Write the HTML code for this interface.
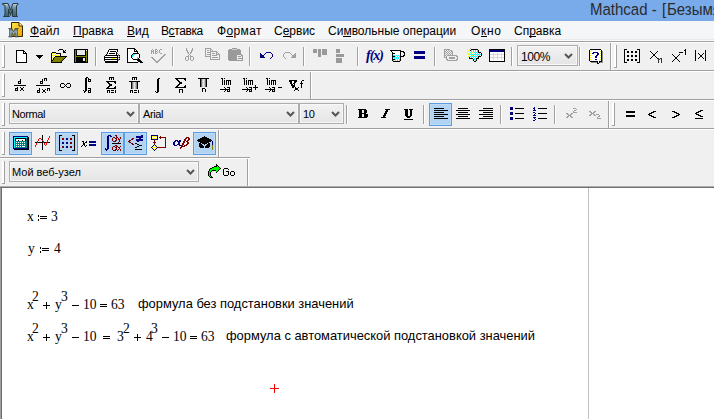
<!DOCTYPE html>
<html><head><meta charset="utf-8">
<style>
*{margin:0;padding:0;box-sizing:border-box}
html,body{width:714px;height:419px;overflow:hidden;background:#fff}
body{position:relative;font-family:"Liberation Sans",sans-serif}
.a{position:absolute}
.t{position:absolute;white-space:nowrap;line-height:1}
.m{font-size:12px;color:#000;top:25px}
.m u{text-decoration:none}
.combo{position:absolute;background:linear-gradient(#f2f2f2,#e5e5e5);border:1px solid #adadad;box-shadow:inset 0 0 0 1px #f8f8f8}
.ct{position:absolute;font-size:11px;color:#000;white-space:nowrap;line-height:1;letter-spacing:-0.4px}
.chev{position:absolute;width:7px;height:5px}
.serif{position:absolute;white-space:nowrap;font-family:"Liberation Serif",serif;font-size:13.6px;color:#000;line-height:1}
.txt{position:absolute;white-space:nowrap;font-family:"Liberation Sans",sans-serif;font-size:12.9px;color:#000;line-height:1}
</style></head><body>
<div class="a" style="left:0;top:0;width:714px;height:21px;background:#79aaea"></div>
<div class="t" style="left:590px;top:2px;font-size:15px;color:#2b2b2b;transform:scaleY(1.1);transform-origin:0 13px">Mathcad -</div>
<div class="t" style="left:662px;top:2px;font-size:15px;color:#2b2b2b;transform:scaleY(1.1);transform-origin:0 13px">[</div>
<div class="t" style="left:667px;top:2px;font-size:15px;color:#2b2b2b;transform:scaleY(1.1);transform-origin:0 13px">Безымянный:1]</div>
<div class="a" style="left:0;top:21px;width:714px;height:20px;background:#f5f6f7"></div>
<div class="t m" style="left:30px"><u>Ф</u>айл</div>
<div class="t m" style="left:73px"><u>П</u>равка</div>
<div class="t m" style="left:127px"><u>В</u>ид</div>
<div class="t m" style="left:161px;letter-spacing:-0.4px">В<u>с</u>тавка</div>
<div class="t m" style="left:217px;letter-spacing:0.35px">Ф<u>о</u>рмат</div>
<div class="t m" style="left:274px">С<u>е</u>рвис</div>
<div class="t m" style="left:328px">Си<u>м</u>вольные операции</div>
<div class="t m" style="left:471px;letter-spacing:0.7px">О<u>к</u>но</div>
<div class="t m" style="left:514px">Сп<u>р</u>авка</div>
<!-- mathcad icon -->
<svg class="a" style="left:0;top:0" width="30" height="41">
<defs>
<linearGradient id="mg" x1="0" y1="0" x2="0" y2="1"><stop offset="0" stop-color="#d0d6d8"/><stop offset="0.35" stop-color="#6c8a98"/><stop offset="1" stop-color="#3e6070"/></linearGradient>
<linearGradient id="dg" x1="0" y1="0" x2="1" y2="1"><stop offset="0" stop-color="#ffe84a"/><stop offset="1" stop-color="#f0a000"/></linearGradient>
<linearGradient id="mg2" x1="0" y1="0" x2="0" y2="1"><stop offset="0" stop-color="#4a5a60"/><stop offset="0.4" stop-color="#a0b4bc"/><stop offset="1" stop-color="#5a7888"/></linearGradient>
</defs>
<path d="M2.5,3.5 H8 L10.5,10 L13,3.5 H18 V4.5 L16.5,5.5 V15 L17.5,16.5 H12.5 V9 L10.5,15.5 L8.5,9 V15 L9.5,16.5 H3.5 L5,15 V5.5 L2.5,4.5 Z" fill="url(#mg)" stroke="#283a42" stroke-width="1"/>
<path d="M11.5,22.5 H19 L22.5,26 V36.5 H11.5 Z" fill="url(#dg)" stroke="#3a2a00" stroke-width="1"/>
<path d="M19,22.5 V26 H22.5" fill="#fff6b0" stroke="#3a2a00" stroke-width="1"/>
<path d="M8.5,28.5 H12 L13.5,32 L15,28.5 H18.5 L17.5,29.5 V36 L18.5,37 H15 V32.5 L13.5,36.5 L12,32.5 V36 L12.5,37 H8.5 L9.5,36 V29.5 Z" fill="url(#mg2)" stroke="#2c3c44" stroke-width="0.6"/>
</svg>

<div class="a" style="left:0;top:39px;width:714px;height:1px;background:#e8e9ea"></div>
<div class="a" style="left:0;top:40px;width:714px;height:1px;background:#fbfbfb"></div>
<div class="a" style="left:0;top:41px;width:714px;height:145px;background:#f0f0f0"></div>
<div class="a" style="left:0;top:41px;width:714px;height:1px;background:#a0a0a0"></div>
<div class="a" style="left:0;top:42px;width:714px;height:1px;background:#fff"></div>
<div class="a" style="left:0;top:70px;width:714px;height:1px;background:#a0a0a0"></div>
<div class="a" style="left:0;top:71px;width:714px;height:1px;background:#fff"></div>
<div class="a" style="left:0;top:99px;width:714px;height:1px;background:#a0a0a0"></div>
<div class="a" style="left:0;top:100px;width:714px;height:1px;background:#fff"></div>
<div class="a" style="left:0;top:128px;width:714px;height:1px;background:#a0a0a0"></div>
<div class="a" style="left:0;top:129px;width:714px;height:1px;background:#fff"></div>
<div class="a" style="left:0;top:157px;width:250px;height:1px;background:#a0a0a0"></div>
<div class="a" style="left:0;top:158px;width:249px;height:1px;background:#fff"></div>

<!-- combos -->
<div class="combo" style="left:517px;top:45px;width:61px;height:21px"></div>
<div class="ct" style="left:521px;top:51px;font-size:12px">100%</div>
<div class="combo" style="left:9px;top:103px;width:130px;height:21px"></div>
<div class="ct" style="left:12px;top:109px">Normal</div>
<div class="combo" style="left:139px;top:103px;width:160px;height:21px"></div>
<div class="ct" style="left:143px;top:109px">Arial</div>
<div class="combo" style="left:299px;top:103px;width:45px;height:21px"></div>
<div class="ct" style="left:303px;top:109px">10</div>
<div class="combo" style="left:9px;top:161px;width:190px;height:21px"></div>
<div class="ct" style="left:12px;top:167px;letter-spacing:0">Мой веб-узел</div>

<div class="a" style="left:0;top:186px;width:714px;height:1px;background:#b0b0b0"></div>
<div class="a" style="left:0;top:187px;width:714px;height:1px;background:#6d6d6d"></div>
<div class="a" style="left:0;top:188px;width:1px;height:231px;background:#a0a0a0"></div>
<div class="a" style="left:1px;top:188px;width:1px;height:231px;background:#6d6d6d"></div>
<div class="a" style="left:588px;top:188px;width:1px;height:231px;background:#c0c0c0"></div>

<svg class="a" style="left:0;top:0" width="714" height="419" shape-rendering="crispEdges"><rect x="2" y="45" width="2" height="23" fill="#ffffff"/><rect x="4" y="45" width="1" height="23" fill="#a0a0a0"/><rect x="2" y="67" width="3" height="1" fill="#a0a0a0"/><rect x="95" y="47" width="1" height="19" fill="#a0a0a0"/><rect x="96" y="47" width="1" height="19" fill="#ffffff"/><rect x="172" y="47" width="1" height="19" fill="#a0a0a0"/><rect x="173" y="47" width="1" height="19" fill="#ffffff"/><rect x="249" y="47" width="1" height="19" fill="#a0a0a0"/><rect x="250" y="47" width="1" height="19" fill="#ffffff"/><rect x="303" y="47" width="1" height="19" fill="#a0a0a0"/><rect x="304" y="47" width="1" height="19" fill="#ffffff"/><rect x="357" y="47" width="1" height="19" fill="#a0a0a0"/><rect x="358" y="47" width="1" height="19" fill="#ffffff"/><rect x="434" y="47" width="1" height="19" fill="#a0a0a0"/><rect x="435" y="47" width="1" height="19" fill="#ffffff"/><rect x="511" y="47" width="1" height="19" fill="#a0a0a0"/><rect x="512" y="47" width="1" height="19" fill="#ffffff"/><rect x="579" y="47" width="1" height="19" fill="#a0a0a0"/><rect x="580" y="47" width="1" height="19" fill="#ffffff"/><rect x="610" y="43" width="1" height="27" fill="#a0a0a0"/><rect x="611" y="43" width="1" height="27" fill="#ffffff"/><rect x="614" y="45" width="2" height="23" fill="#ffffff"/><rect x="616" y="45" width="1" height="23" fill="#a0a0a0"/><rect x="614" y="67" width="3" height="1" fill="#a0a0a0"/><rect x="2" y="74" width="2" height="23" fill="#ffffff"/><rect x="4" y="74" width="1" height="23" fill="#a0a0a0"/><rect x="2" y="96" width="3" height="1" fill="#a0a0a0"/><rect x="310" y="72" width="1" height="27" fill="#a0a0a0"/><rect x="311" y="72" width="1" height="27" fill="#ffffff"/><rect x="2" y="103" width="2" height="23" fill="#ffffff"/><rect x="4" y="103" width="1" height="23" fill="#a0a0a0"/><rect x="2" y="125" width="3" height="1" fill="#a0a0a0"/><rect x="346" y="105" width="1" height="19" fill="#a0a0a0"/><rect x="347" y="105" width="1" height="19" fill="#ffffff"/><rect x="423" y="105" width="1" height="19" fill="#a0a0a0"/><rect x="424" y="105" width="1" height="19" fill="#ffffff"/><rect x="500" y="105" width="1" height="19" fill="#a0a0a0"/><rect x="501" y="105" width="1" height="19" fill="#ffffff"/><rect x="554" y="105" width="1" height="19" fill="#a0a0a0"/><rect x="555" y="105" width="1" height="19" fill="#ffffff"/><rect x="608" y="101" width="1" height="27" fill="#a0a0a0"/><rect x="609" y="101" width="1" height="27" fill="#ffffff"/><rect x="612" y="103" width="2" height="23" fill="#ffffff"/><rect x="614" y="103" width="1" height="23" fill="#a0a0a0"/><rect x="612" y="125" width="3" height="1" fill="#a0a0a0"/><rect x="2" y="132" width="2" height="23" fill="#ffffff"/><rect x="4" y="132" width="1" height="23" fill="#a0a0a0"/><rect x="2" y="154" width="3" height="1" fill="#a0a0a0"/><rect x="218" y="130" width="1" height="27" fill="#a0a0a0"/><rect x="219" y="130" width="1" height="27" fill="#ffffff"/><rect x="2" y="161" width="2" height="23" fill="#ffffff"/><rect x="4" y="161" width="1" height="23" fill="#a0a0a0"/><rect x="2" y="183" width="3" height="1" fill="#a0a0a0"/><rect x="247" y="159" width="1" height="27" fill="#a0a0a0"/><rect x="248" y="159" width="1" height="27" fill="#ffffff"/><rect x="429" y="103" width="23" height="23" fill="#5c9ee4"/><rect x="430" y="104" width="21" height="21" fill="#bedbf5"/><rect x="431" y="105" width="19" height="19" fill="#b3d3f2"/><rect x="9" y="132" width="23" height="23" fill="#5c9ee4"/><rect x="10" y="133" width="21" height="21" fill="#bedbf5"/><rect x="11" y="134" width="19" height="19" fill="#b3d3f2"/><rect x="55" y="132" width="23" height="23" fill="#5c9ee4"/><rect x="56" y="133" width="21" height="21" fill="#bedbf5"/><rect x="57" y="134" width="19" height="19" fill="#b3d3f2"/><rect x="101" y="132" width="23" height="23" fill="#5c9ee4"/><rect x="102" y="133" width="21" height="21" fill="#bedbf5"/><rect x="103" y="134" width="19" height="19" fill="#b3d3f2"/><rect x="124" y="132" width="23" height="23" fill="#5c9ee4"/><rect x="125" y="133" width="21" height="21" fill="#bedbf5"/><rect x="126" y="134" width="19" height="19" fill="#b3d3f2"/><rect x="193" y="132" width="23" height="23" fill="#5c9ee4"/><rect x="194" y="133" width="21" height="21" fill="#bedbf5"/><rect x="195" y="134" width="19" height="19" fill="#b3d3f2"/><rect x="313" y="49" width="4" height="4" fill="#999999"/><rect x="318" y="49" width="3" height="8" fill="#999999"/><rect x="322" y="49" width="5" height="6" fill="#999999"/><rect x="336" y="49" width="4" height="4" fill="#999999"/><rect x="336" y="54" width="8" height="3" fill="#999999"/><rect x="336" y="58" width="6" height="5" fill="#999999"/><rect x="414" y="51" width="11" height="3" fill="#000080"/><rect x="414" y="56" width="11" height="3" fill="#000080"/><rect x="30" y="36" width="9" height="1" fill="#000"/><rect x="73" y="36" width="9" height="1" fill="#000"/><rect x="127" y="36" width="8" height="1" fill="#000"/><rect x="169" y="36" width="6" height="1" fill="#000"/><rect x="226" y="36" width="7" height="1" fill="#000"/><rect x="283" y="36" width="7" height="1" fill="#000"/><rect x="343" y="36" width="8" height="1" fill="#000"/><rect x="481" y="36" width="6" height="1" fill="#000"/><rect x="529" y="36" width="7" height="1" fill="#000"/><rect x="16" y="50" width="8" height="1" fill="#000000"/><rect x="16" y="51" width="1" height="1" fill="#000000"/><rect x="17" y="51" width="6" height="1" fill="#ffffff"/><rect x="23" y="51" width="2" height="1" fill="#000000"/><rect x="16" y="52" width="1" height="1" fill="#000000"/><rect x="17" y="52" width="6" height="1" fill="#ffffff"/><rect x="23" y="52" width="1" height="1" fill="#000000"/><rect x="24" y="52" width="1" height="1" fill="#ffffff"/><rect x="25" y="52" width="1" height="1" fill="#000000"/><rect x="16" y="53" width="1" height="1" fill="#000000"/><rect x="17" y="53" width="6" height="1" fill="#ffffff"/><rect x="23" y="53" width="4" height="1" fill="#000000"/><rect x="16" y="54" width="1" height="1" fill="#000000"/><rect x="17" y="54" width="9" height="1" fill="#ffffff"/><rect x="26" y="54" width="1" height="1" fill="#000000"/><rect x="16" y="55" width="1" height="1" fill="#000000"/><rect x="17" y="55" width="9" height="1" fill="#ffffff"/><rect x="26" y="55" width="1" height="1" fill="#000000"/><rect x="16" y="56" width="1" height="1" fill="#000000"/><rect x="17" y="56" width="9" height="1" fill="#ffffff"/><rect x="26" y="56" width="1" height="1" fill="#000000"/><rect x="16" y="57" width="1" height="1" fill="#000000"/><rect x="17" y="57" width="9" height="1" fill="#ffffff"/><rect x="26" y="57" width="1" height="1" fill="#000000"/><rect x="16" y="58" width="1" height="1" fill="#000000"/><rect x="17" y="58" width="9" height="1" fill="#ffffff"/><rect x="26" y="58" width="1" height="1" fill="#000000"/><rect x="16" y="59" width="1" height="1" fill="#000000"/><rect x="17" y="59" width="9" height="1" fill="#ffffff"/><rect x="26" y="59" width="1" height="1" fill="#000000"/><rect x="16" y="60" width="1" height="1" fill="#000000"/><rect x="17" y="60" width="9" height="1" fill="#ffffff"/><rect x="26" y="60" width="1" height="1" fill="#000000"/><rect x="16" y="61" width="1" height="1" fill="#000000"/><rect x="17" y="61" width="9" height="1" fill="#ffffff"/><rect x="26" y="61" width="1" height="1" fill="#000000"/><rect x="16" y="62" width="11" height="1" fill="#000000"/><rect x="36" y="55" width="7" height="1" fill="#000000"/><rect x="37" y="56" width="5" height="1" fill="#000000"/><rect x="38" y="57" width="3" height="1" fill="#000000"/><rect x="39" y="58" width="1" height="1" fill="#000000"/><rect x="59" y="49" width="4" height="1" fill="#000000"/><rect x="58" y="50" width="1" height="1" fill="#000000"/><rect x="63" y="50" width="1" height="1" fill="#000000"/><rect x="65" y="50" width="1" height="1" fill="#000000"/><rect x="63" y="51" width="2" height="1" fill="#000000"/><rect x="52" y="52" width="4" height="1" fill="#000000"/><rect x="63" y="52" width="3" height="1" fill="#000000"/><rect x="51" y="53" width="1" height="1" fill="#000000"/><rect x="52" y="53" width="1" height="1" fill="#ffff00"/><rect x="53" y="53" width="1" height="1" fill="#ffffff"/><rect x="54" y="53" width="1" height="1" fill="#ffff00"/><rect x="55" y="53" width="1" height="1" fill="#ffffff"/><rect x="56" y="53" width="5" height="1" fill="#000000"/><rect x="51" y="54" width="1" height="1" fill="#000000"/><rect x="52" y="54" width="1" height="1" fill="#ffffff"/><rect x="53" y="54" width="1" height="1" fill="#ffff00"/><rect x="54" y="54" width="1" height="1" fill="#ffffff"/><rect x="55" y="54" width="1" height="1" fill="#ffff00"/><rect x="56" y="54" width="1" height="1" fill="#ffffff"/><rect x="57" y="54" width="1" height="1" fill="#ffff00"/><rect x="58" y="54" width="1" height="1" fill="#ffffff"/><rect x="59" y="54" width="1" height="1" fill="#ffff00"/><rect x="60" y="54" width="1" height="1" fill="#000000"/><rect x="51" y="55" width="1" height="1" fill="#000000"/><rect x="52" y="55" width="1" height="1" fill="#ffff00"/><rect x="53" y="55" width="1" height="1" fill="#ffffff"/><rect x="54" y="55" width="1" height="1" fill="#ffff00"/><rect x="55" y="55" width="1" height="1" fill="#ffffff"/><rect x="56" y="55" width="1" height="1" fill="#ffff00"/><rect x="57" y="55" width="1" height="1" fill="#ffffff"/><rect x="58" y="55" width="1" height="1" fill="#ffff00"/><rect x="59" y="55" width="1" height="1" fill="#ffffff"/><rect x="60" y="55" width="1" height="1" fill="#000000"/><rect x="51" y="56" width="1" height="1" fill="#000000"/><rect x="52" y="56" width="1" height="1" fill="#ffffff"/><rect x="53" y="56" width="1" height="1" fill="#ffff00"/><rect x="54" y="56" width="1" height="1" fill="#ffffff"/><rect x="55" y="56" width="12" height="1" fill="#000000"/><rect x="51" y="57" width="1" height="1" fill="#000000"/><rect x="52" y="57" width="1" height="1" fill="#ffff00"/><rect x="53" y="57" width="1" height="1" fill="#ffffff"/><rect x="54" y="57" width="1" height="1" fill="#000000"/><rect x="55" y="57" width="10" height="1" fill="#808000"/><rect x="65" y="57" width="1" height="1" fill="#000000"/><rect x="51" y="58" width="1" height="1" fill="#000000"/><rect x="52" y="58" width="1" height="1" fill="#ffffff"/><rect x="53" y="58" width="1" height="1" fill="#000000"/><rect x="54" y="58" width="10" height="1" fill="#808000"/><rect x="64" y="58" width="1" height="1" fill="#000000"/><rect x="51" y="59" width="1" height="1" fill="#000000"/><rect x="52" y="59" width="1" height="1" fill="#ffff00"/><rect x="53" y="59" width="1" height="1" fill="#000000"/><rect x="54" y="59" width="9" height="1" fill="#808000"/><rect x="63" y="59" width="1" height="1" fill="#000000"/><rect x="51" y="60" width="2" height="1" fill="#000000"/><rect x="53" y="60" width="9" height="1" fill="#808000"/><rect x="62" y="60" width="1" height="1" fill="#000000"/><rect x="51" y="61" width="1" height="1" fill="#000000"/><rect x="52" y="61" width="9" height="1" fill="#808000"/><rect x="61" y="61" width="1" height="1" fill="#000000"/><rect x="51" y="62" width="11" height="1" fill="#000000"/><rect x="74" y="49" width="14" height="1" fill="#000000"/><rect x="74" y="50" width="1" height="1" fill="#000000"/><rect x="75" y="50" width="1" height="1" fill="#808000"/><rect x="76" y="50" width="1" height="1" fill="#000000"/><rect x="77" y="50" width="8" height="1" fill="#e8e8e8"/><rect x="85" y="50" width="1" height="1" fill="#000000"/><rect x="86" y="50" width="1" height="1" fill="#ffffff"/><rect x="87" y="50" width="1" height="1" fill="#000000"/><rect x="74" y="51" width="1" height="1" fill="#000000"/><rect x="75" y="51" width="1" height="1" fill="#808000"/><rect x="76" y="51" width="1" height="1" fill="#000000"/><rect x="77" y="51" width="8" height="1" fill="#e8e8e8"/><rect x="85" y="51" width="1" height="1" fill="#000000"/><rect x="86" y="51" width="1" height="1" fill="#808000"/><rect x="87" y="51" width="1" height="1" fill="#000000"/><rect x="74" y="52" width="1" height="1" fill="#000000"/><rect x="75" y="52" width="1" height="1" fill="#808000"/><rect x="76" y="52" width="1" height="1" fill="#000000"/><rect x="77" y="52" width="8" height="1" fill="#e8e8e8"/><rect x="85" y="52" width="1" height="1" fill="#000000"/><rect x="86" y="52" width="1" height="1" fill="#808000"/><rect x="87" y="52" width="1" height="1" fill="#000000"/><rect x="74" y="53" width="1" height="1" fill="#000000"/><rect x="75" y="53" width="1" height="1" fill="#808000"/><rect x="76" y="53" width="1" height="1" fill="#000000"/><rect x="77" y="53" width="8" height="1" fill="#e8e8e8"/><rect x="85" y="53" width="1" height="1" fill="#000000"/><rect x="86" y="53" width="1" height="1" fill="#808000"/><rect x="87" y="53" width="1" height="1" fill="#000000"/><rect x="74" y="54" width="1" height="1" fill="#000000"/><rect x="75" y="54" width="1" height="1" fill="#808000"/><rect x="76" y="54" width="1" height="1" fill="#000000"/><rect x="77" y="54" width="8" height="1" fill="#e8e8e8"/><rect x="85" y="54" width="1" height="1" fill="#000000"/><rect x="86" y="54" width="1" height="1" fill="#808000"/><rect x="87" y="54" width="1" height="1" fill="#000000"/><rect x="74" y="55" width="1" height="1" fill="#000000"/><rect x="75" y="55" width="1" height="1" fill="#808000"/><rect x="76" y="55" width="10" height="1" fill="#000000"/><rect x="86" y="55" width="1" height="1" fill="#808000"/><rect x="87" y="55" width="1" height="1" fill="#000000"/><rect x="74" y="56" width="1" height="1" fill="#000000"/><rect x="75" y="56" width="12" height="1" fill="#808000"/><rect x="87" y="56" width="1" height="1" fill="#000000"/><rect x="74" y="57" width="1" height="1" fill="#000000"/><rect x="75" y="57" width="1" height="1" fill="#808000"/><rect x="76" y="57" width="10" height="1" fill="#000000"/><rect x="86" y="57" width="1" height="1" fill="#808000"/><rect x="87" y="57" width="1" height="1" fill="#000000"/><rect x="74" y="58" width="1" height="1" fill="#000000"/><rect x="75" y="58" width="1" height="1" fill="#808000"/><rect x="76" y="58" width="7" height="1" fill="#000000"/><rect x="83" y="58" width="2" height="1" fill="#e8e8e8"/><rect x="85" y="58" width="1" height="1" fill="#000000"/><rect x="86" y="58" width="1" height="1" fill="#808000"/><rect x="87" y="58" width="1" height="1" fill="#000000"/><rect x="74" y="59" width="1" height="1" fill="#000000"/><rect x="75" y="59" width="1" height="1" fill="#808000"/><rect x="76" y="59" width="7" height="1" fill="#000000"/><rect x="83" y="59" width="2" height="1" fill="#e8e8e8"/><rect x="85" y="59" width="1" height="1" fill="#000000"/><rect x="86" y="59" width="1" height="1" fill="#808000"/><rect x="87" y="59" width="1" height="1" fill="#000000"/><rect x="74" y="60" width="1" height="1" fill="#000000"/><rect x="75" y="60" width="1" height="1" fill="#808000"/><rect x="76" y="60" width="7" height="1" fill="#000000"/><rect x="83" y="60" width="2" height="1" fill="#e8e8e8"/><rect x="85" y="60" width="1" height="1" fill="#000000"/><rect x="86" y="60" width="1" height="1" fill="#808000"/><rect x="87" y="60" width="1" height="1" fill="#000000"/><rect x="74" y="61" width="1" height="1" fill="#000000"/><rect x="75" y="61" width="1" height="1" fill="#808000"/><rect x="76" y="61" width="10" height="1" fill="#000000"/><rect x="86" y="61" width="1" height="1" fill="#808000"/><rect x="87" y="61" width="1" height="1" fill="#000000"/><rect x="74" y="62" width="14" height="1" fill="#000000"/><rect x="109" y="49" width="9" height="1" fill="#000000"/><rect x="108" y="50" width="1" height="1" fill="#000000"/><rect x="109" y="50" width="8" height="1" fill="#ffffff"/><rect x="117" y="50" width="1" height="1" fill="#000000"/><rect x="108" y="51" width="1" height="1" fill="#000000"/><rect x="109" y="51" width="1" height="1" fill="#ffffff"/><rect x="110" y="51" width="6" height="1" fill="#000000"/><rect x="116" y="51" width="1" height="1" fill="#ffffff"/><rect x="117" y="51" width="1" height="1" fill="#000000"/><rect x="107" y="52" width="1" height="1" fill="#000000"/><rect x="108" y="52" width="8" height="1" fill="#ffffff"/><rect x="116" y="52" width="1" height="1" fill="#000000"/><rect x="107" y="53" width="1" height="1" fill="#000000"/><rect x="108" y="53" width="1" height="1" fill="#ffffff"/><rect x="109" y="53" width="6" height="1" fill="#000000"/><rect x="115" y="53" width="1" height="1" fill="#ffffff"/><rect x="116" y="53" width="1" height="1" fill="#000000"/><rect x="117" y="53" width="1" height="1" fill="#808080"/><rect x="106" y="54" width="1" height="1" fill="#000000"/><rect x="107" y="54" width="9" height="1" fill="#ffffff"/><rect x="116" y="54" width="1" height="1" fill="#000000"/><rect x="117" y="54" width="1" height="1" fill="#ffffff"/><rect x="118" y="54" width="1" height="1" fill="#808080"/><rect x="105" y="55" width="13" height="1" fill="#000000"/><rect x="118" y="55" width="1" height="1" fill="#808080"/><rect x="119" y="55" width="1" height="1" fill="#000000"/><rect x="104" y="56" width="1" height="1" fill="#000000"/><rect x="105" y="56" width="12" height="1" fill="#ffffff"/><rect x="117" y="56" width="1" height="1" fill="#000000"/><rect x="118" y="56" width="1" height="1" fill="#ffffff"/><rect x="119" y="56" width="1" height="1" fill="#808080"/><rect x="104" y="57" width="14" height="1" fill="#000000"/><rect x="118" y="57" width="1" height="1" fill="#808080"/><rect x="119" y="57" width="1" height="1" fill="#000000"/><rect x="104" y="58" width="1" height="1" fill="#000000"/><rect x="105" y="58" width="6" height="1" fill="#ffffff"/><rect x="111" y="58" width="4" height="1" fill="#ffff00"/><rect x="115" y="58" width="2" height="1" fill="#ffffff"/><rect x="117" y="58" width="1" height="1" fill="#000000"/><rect x="118" y="58" width="1" height="1" fill="#ffffff"/><rect x="119" y="58" width="1" height="1" fill="#808080"/><rect x="104" y="59" width="14" height="1" fill="#000000"/><rect x="118" y="59" width="1" height="1" fill="#808080"/><rect x="119" y="59" width="1" height="1" fill="#000000"/><rect x="104" y="60" width="1" height="1" fill="#000000"/><rect x="105" y="60" width="12" height="1" fill="#ffffff"/><rect x="117" y="60" width="1" height="1" fill="#000000"/><rect x="118" y="60" width="1" height="1" fill="#808080"/><rect x="105" y="61" width="13" height="1" fill="#000000"/><rect x="105" y="62" width="13" height="1" fill="#000000"/><rect x="127" y="48" width="8" height="1" fill="#000000"/><rect x="127" y="49" width="1" height="1" fill="#000000"/><rect x="128" y="49" width="6" height="1" fill="#ffffff"/><rect x="134" y="49" width="2" height="1" fill="#000000"/><rect x="127" y="50" width="1" height="1" fill="#000000"/><rect x="128" y="50" width="6" height="1" fill="#ffffff"/><rect x="134" y="50" width="1" height="1" fill="#000000"/><rect x="135" y="50" width="1" height="1" fill="#ffffff"/><rect x="136" y="50" width="1" height="1" fill="#000000"/><rect x="127" y="51" width="1" height="1" fill="#000000"/><rect x="128" y="51" width="6" height="1" fill="#ffffff"/><rect x="134" y="51" width="4" height="1" fill="#000000"/><rect x="127" y="52" width="1" height="1" fill="#000000"/><rect x="128" y="52" width="9" height="1" fill="#ffffff"/><rect x="137" y="52" width="1" height="1" fill="#000000"/><rect x="127" y="53" width="1" height="1" fill="#000000"/><rect x="128" y="53" width="5" height="1" fill="#ffffff"/><rect x="133" y="53" width="6" height="1" fill="#000000"/><rect x="127" y="54" width="1" height="1" fill="#000000"/><rect x="128" y="54" width="4" height="1" fill="#ffffff"/><rect x="132" y="54" width="1" height="1" fill="#000000"/><rect x="133" y="54" width="2" height="1" fill="#00ffff"/><rect x="135" y="54" width="4" height="1" fill="#ffffff"/><rect x="139" y="54" width="1" height="1" fill="#000000"/><rect x="127" y="55" width="1" height="1" fill="#000000"/><rect x="128" y="55" width="3" height="1" fill="#ffffff"/><rect x="131" y="55" width="1" height="1" fill="#000000"/><rect x="132" y="55" width="2" height="1" fill="#00ffff"/><rect x="134" y="55" width="5" height="1" fill="#ffffff"/><rect x="139" y="55" width="1" height="1" fill="#000000"/><rect x="127" y="56" width="1" height="1" fill="#000000"/><rect x="128" y="56" width="3" height="1" fill="#ffffff"/><rect x="131" y="56" width="1" height="1" fill="#000000"/><rect x="132" y="56" width="1" height="1" fill="#00ffff"/><rect x="133" y="56" width="6" height="1" fill="#ffffff"/><rect x="139" y="56" width="1" height="1" fill="#000000"/><rect x="127" y="57" width="1" height="1" fill="#000000"/><rect x="128" y="57" width="3" height="1" fill="#ffffff"/><rect x="131" y="57" width="1" height="1" fill="#000000"/><rect x="132" y="57" width="5" height="1" fill="#ffffff"/><rect x="137" y="57" width="1" height="1" fill="#00ffff"/><rect x="138" y="57" width="1" height="1" fill="#ffffff"/><rect x="139" y="57" width="1" height="1" fill="#000000"/><rect x="127" y="58" width="1" height="1" fill="#000000"/><rect x="128" y="58" width="4" height="1" fill="#ffffff"/><rect x="132" y="58" width="1" height="1" fill="#000000"/><rect x="133" y="58" width="4" height="1" fill="#ffffff"/><rect x="137" y="58" width="1" height="1" fill="#00ffff"/><rect x="138" y="58" width="1" height="1" fill="#000000"/><rect x="127" y="59" width="1" height="1" fill="#000000"/><rect x="128" y="59" width="5" height="1" fill="#ffffff"/><rect x="133" y="59" width="7" height="1" fill="#000000"/><rect x="127" y="60" width="1" height="1" fill="#000000"/><rect x="128" y="60" width="9" height="1" fill="#ffffff"/><rect x="137" y="60" width="4" height="1" fill="#000000"/><rect x="127" y="61" width="1" height="1" fill="#000000"/><rect x="128" y="61" width="10" height="1" fill="#ffffff"/><rect x="138" y="61" width="4" height="1" fill="#000000"/><rect x="127" y="62" width="11" height="1" fill="#000000"/><rect x="140" y="62" width="3" height="1" fill="#000000"/><rect x="152" y="49" width="1" height="1" fill="#a0a0a0"/><rect x="155" y="49" width="2" height="1" fill="#a0a0a0"/><rect x="160" y="49" width="2" height="1" fill="#a0a0a0"/><rect x="151" y="50" width="1" height="1" fill="#a0a0a0"/><rect x="153" y="50" width="1" height="1" fill="#a0a0a0"/><rect x="155" y="50" width="1" height="1" fill="#a0a0a0"/><rect x="157" y="50" width="1" height="1" fill="#a0a0a0"/><rect x="159" y="50" width="1" height="1" fill="#a0a0a0"/><rect x="151" y="51" width="3" height="1" fill="#a0a0a0"/><rect x="155" y="51" width="2" height="1" fill="#a0a0a0"/><rect x="159" y="51" width="1" height="1" fill="#a0a0a0"/><rect x="151" y="52" width="1" height="1" fill="#a0a0a0"/><rect x="153" y="52" width="1" height="1" fill="#a0a0a0"/><rect x="155" y="52" width="1" height="1" fill="#a0a0a0"/><rect x="157" y="52" width="1" height="1" fill="#a0a0a0"/><rect x="159" y="52" width="1" height="1" fill="#a0a0a0"/><rect x="151" y="53" width="1" height="1" fill="#a0a0a0"/><rect x="153" y="53" width="1" height="1" fill="#a0a0a0"/><rect x="155" y="53" width="2" height="1" fill="#a0a0a0"/><rect x="160" y="53" width="2" height="1" fill="#a0a0a0"/><rect x="164" y="54" width="2" height="1" fill="#a0a0a0"/><rect x="163" y="55" width="2" height="1" fill="#a0a0a0"/><rect x="162" y="56" width="2" height="1" fill="#a0a0a0"/><rect x="151" y="57" width="2" height="1" fill="#a0a0a0"/><rect x="161" y="57" width="2" height="1" fill="#a0a0a0"/><rect x="152" y="58" width="2" height="1" fill="#a0a0a0"/><rect x="160" y="58" width="2" height="1" fill="#a0a0a0"/><rect x="153" y="59" width="2" height="1" fill="#a0a0a0"/><rect x="159" y="59" width="2" height="1" fill="#a0a0a0"/><rect x="154" y="60" width="2" height="1" fill="#a0a0a0"/><rect x="158" y="60" width="2" height="1" fill="#a0a0a0"/><rect x="155" y="61" width="4" height="1" fill="#a0a0a0"/><rect x="156" y="62" width="2" height="1" fill="#a0a0a0"/><rect x="186" y="48" width="1" height="1" fill="#a0a0a0"/><rect x="192" y="48" width="1" height="1" fill="#a0a0a0"/><rect x="186" y="49" width="1" height="1" fill="#a0a0a0"/><rect x="192" y="49" width="1" height="1" fill="#a0a0a0"/><rect x="186" y="50" width="2" height="1" fill="#a0a0a0"/><rect x="191" y="50" width="2" height="1" fill="#a0a0a0"/><rect x="187" y="51" width="1" height="1" fill="#a0a0a0"/><rect x="191" y="51" width="1" height="1" fill="#a0a0a0"/><rect x="187" y="52" width="2" height="1" fill="#a0a0a0"/><rect x="190" y="52" width="2" height="1" fill="#a0a0a0"/><rect x="188" y="53" width="1" height="1" fill="#a0a0a0"/><rect x="190" y="53" width="1" height="1" fill="#a0a0a0"/><rect x="189" y="54" width="1" height="1" fill="#a0a0a0"/><rect x="188" y="55" width="1" height="1" fill="#a0a0a0"/><rect x="190" y="55" width="1" height="1" fill="#a0a0a0"/><rect x="186" y="56" width="3" height="1" fill="#a0a0a0"/><rect x="190" y="56" width="3" height="1" fill="#a0a0a0"/><rect x="185" y="57" width="1" height="1" fill="#a0a0a0"/><rect x="188" y="57" width="1" height="1" fill="#a0a0a0"/><rect x="190" y="57" width="1" height="1" fill="#a0a0a0"/><rect x="193" y="57" width="1" height="1" fill="#a0a0a0"/><rect x="185" y="58" width="1" height="1" fill="#a0a0a0"/><rect x="188" y="58" width="1" height="1" fill="#a0a0a0"/><rect x="190" y="58" width="1" height="1" fill="#a0a0a0"/><rect x="193" y="58" width="1" height="1" fill="#a0a0a0"/><rect x="185" y="59" width="1" height="1" fill="#a0a0a0"/><rect x="188" y="59" width="1" height="1" fill="#a0a0a0"/><rect x="190" y="59" width="1" height="1" fill="#a0a0a0"/><rect x="193" y="59" width="1" height="1" fill="#a0a0a0"/><rect x="186" y="60" width="2" height="1" fill="#a0a0a0"/><rect x="191" y="60" width="2" height="1" fill="#a0a0a0"/><rect x="205" y="48" width="6" height="1" fill="#a0a0a0"/><rect x="205" y="49" width="1" height="1" fill="#a0a0a0"/><rect x="210" y="49" width="2" height="1" fill="#a0a0a0"/><rect x="205" y="50" width="1" height="1" fill="#a0a0a0"/><rect x="207" y="50" width="2" height="1" fill="#a0a0a0"/><rect x="210" y="50" width="1" height="1" fill="#a0a0a0"/><rect x="212" y="50" width="1" height="1" fill="#a0a0a0"/><rect x="205" y="51" width="1" height="1" fill="#a0a0a0"/><rect x="210" y="51" width="7" height="1" fill="#a0a0a0"/><rect x="205" y="52" width="1" height="1" fill="#a0a0a0"/><rect x="207" y="52" width="4" height="1" fill="#a0a0a0"/><rect x="216" y="52" width="2" height="1" fill="#a0a0a0"/><rect x="205" y="53" width="1" height="1" fill="#a0a0a0"/><rect x="210" y="53" width="1" height="1" fill="#a0a0a0"/><rect x="212" y="53" width="3" height="1" fill="#a0a0a0"/><rect x="216" y="53" width="1" height="1" fill="#a0a0a0"/><rect x="218" y="53" width="1" height="1" fill="#a0a0a0"/><rect x="205" y="54" width="1" height="1" fill="#a0a0a0"/><rect x="207" y="54" width="4" height="1" fill="#a0a0a0"/><rect x="216" y="54" width="4" height="1" fill="#a0a0a0"/><rect x="205" y="55" width="1" height="1" fill="#a0a0a0"/><rect x="210" y="55" width="1" height="1" fill="#a0a0a0"/><rect x="212" y="55" width="5" height="1" fill="#a0a0a0"/><rect x="219" y="55" width="1" height="1" fill="#a0a0a0"/><rect x="205" y="56" width="6" height="1" fill="#a0a0a0"/><rect x="219" y="56" width="1" height="1" fill="#a0a0a0"/><rect x="210" y="57" width="1" height="1" fill="#a0a0a0"/><rect x="212" y="57" width="6" height="1" fill="#a0a0a0"/><rect x="219" y="57" width="1" height="1" fill="#a0a0a0"/><rect x="210" y="58" width="1" height="1" fill="#a0a0a0"/><rect x="219" y="58" width="1" height="1" fill="#a0a0a0"/><rect x="210" y="59" width="10" height="1" fill="#a0a0a0"/><rect x="232" y="48" width="5" height="1" fill="#9a9a9a"/><rect x="229" y="49" width="3" height="1" fill="#9a9a9a"/><rect x="232" y="49" width="5" height="1" fill="#d0d0d0"/><rect x="237" y="49" width="3" height="1" fill="#9a9a9a"/><rect x="228" y="50" width="13" height="1" fill="#9a9a9a"/><rect x="228" y="51" width="13" height="1" fill="#9a9a9a"/><rect x="228" y="52" width="13" height="1" fill="#9a9a9a"/><rect x="228" y="53" width="13" height="1" fill="#9a9a9a"/><rect x="228" y="54" width="8" height="1" fill="#9a9a9a"/><rect x="236" y="54" width="6" height="1" fill="#9a9a9a"/><rect x="228" y="55" width="8" height="1" fill="#9a9a9a"/><rect x="236" y="55" width="1" height="1" fill="#9a9a9a"/><rect x="237" y="55" width="4" height="1" fill="#ececec"/><rect x="241" y="55" width="2" height="1" fill="#9a9a9a"/><rect x="228" y="56" width="8" height="1" fill="#9a9a9a"/><rect x="236" y="56" width="1" height="1" fill="#9a9a9a"/><rect x="237" y="56" width="1" height="1" fill="#ececec"/><rect x="238" y="56" width="3" height="1" fill="#9a9a9a"/><rect x="241" y="56" width="1" height="1" fill="#ececec"/><rect x="242" y="56" width="1" height="1" fill="#9a9a9a"/><rect x="228" y="57" width="8" height="1" fill="#9a9a9a"/><rect x="236" y="57" width="1" height="1" fill="#9a9a9a"/><rect x="237" y="57" width="5" height="1" fill="#ececec"/><rect x="242" y="57" width="1" height="1" fill="#9a9a9a"/><rect x="228" y="58" width="8" height="1" fill="#9a9a9a"/><rect x="236" y="58" width="1" height="1" fill="#9a9a9a"/><rect x="237" y="58" width="1" height="1" fill="#ececec"/><rect x="238" y="58" width="5" height="1" fill="#9a9a9a"/><rect x="228" y="59" width="8" height="1" fill="#9a9a9a"/><rect x="236" y="59" width="1" height="1" fill="#9a9a9a"/><rect x="237" y="59" width="5" height="1" fill="#ececec"/><rect x="242" y="59" width="1" height="1" fill="#9a9a9a"/><rect x="229" y="60" width="7" height="1" fill="#9a9a9a"/><rect x="236" y="60" width="7" height="1" fill="#9a9a9a"/><rect x="266" y="52" width="5" height="1" fill="#000080"/><rect x="260" y="53" width="1" height="1" fill="#000080"/><rect x="265" y="53" width="1" height="1" fill="#000080"/><rect x="271" y="53" width="1" height="1" fill="#000080"/><rect x="260" y="54" width="2" height="1" fill="#000080"/><rect x="264" y="54" width="1" height="1" fill="#000080"/><rect x="272" y="54" width="1" height="1" fill="#000080"/><rect x="260" y="55" width="4" height="1" fill="#000080"/><rect x="272" y="55" width="1" height="1" fill="#000080"/><rect x="260" y="56" width="4" height="1" fill="#000080"/><rect x="272" y="56" width="1" height="1" fill="#000080"/><rect x="260" y="57" width="5" height="1" fill="#000080"/><rect x="271" y="57" width="1" height="1" fill="#000080"/><rect x="270" y="58" width="1" height="1" fill="#000080"/><rect x="285" y="52" width="5" height="1" fill="#a0a0a0"/><rect x="284" y="53" width="1" height="1" fill="#a0a0a0"/><rect x="290" y="53" width="1" height="1" fill="#a0a0a0"/><rect x="295" y="53" width="1" height="1" fill="#a0a0a0"/><rect x="283" y="54" width="1" height="1" fill="#a0a0a0"/><rect x="291" y="54" width="1" height="1" fill="#a0a0a0"/><rect x="294" y="54" width="2" height="1" fill="#a0a0a0"/><rect x="283" y="55" width="1" height="1" fill="#a0a0a0"/><rect x="292" y="55" width="4" height="1" fill="#a0a0a0"/><rect x="283" y="56" width="1" height="1" fill="#a0a0a0"/><rect x="292" y="56" width="4" height="1" fill="#a0a0a0"/><rect x="284" y="57" width="1" height="1" fill="#a0a0a0"/><rect x="291" y="57" width="5" height="1" fill="#a0a0a0"/><rect x="285" y="58" width="1" height="1" fill="#a0a0a0"/><rect x="390" y="50" width="11" height="1" fill="#000000"/><rect x="391" y="51" width="1" height="1" fill="#000000"/><rect x="392" y="51" width="8" height="1" fill="#ffffff"/><rect x="400" y="51" width="4" height="1" fill="#000000"/><rect x="392" y="52" width="1" height="1" fill="#000000"/><rect x="393" y="52" width="7" height="1" fill="#ffffff"/><rect x="400" y="52" width="1" height="1" fill="#000000"/><rect x="403" y="52" width="2" height="1" fill="#000000"/><rect x="392" y="53" width="3" height="1" fill="#000000"/><rect x="395" y="53" width="5" height="1" fill="#ffffff"/><rect x="400" y="53" width="1" height="1" fill="#000000"/><rect x="404" y="53" width="1" height="1" fill="#000000"/><rect x="392" y="54" width="1" height="1" fill="#000000"/><rect x="393" y="54" width="7" height="1" fill="#ffffff"/><rect x="400" y="54" width="1" height="1" fill="#000000"/><rect x="404" y="54" width="1" height="1" fill="#000000"/><rect x="392" y="55" width="1" height="1" fill="#000000"/><rect x="393" y="55" width="2" height="1" fill="#00ffff"/><rect x="395" y="55" width="1" height="1" fill="#ffffff"/><rect x="396" y="55" width="1" height="1" fill="#00ffff"/><rect x="397" y="55" width="1" height="1" fill="#ffffff"/><rect x="398" y="55" width="1" height="1" fill="#00ffff"/><rect x="399" y="55" width="1" height="1" fill="#ffffff"/><rect x="400" y="55" width="1" height="1" fill="#000000"/><rect x="403" y="55" width="2" height="1" fill="#000000"/><rect x="392" y="56" width="3" height="1" fill="#000000"/><rect x="395" y="56" width="1" height="1" fill="#00ffff"/><rect x="396" y="56" width="1" height="1" fill="#ffffff"/><rect x="397" y="56" width="1" height="1" fill="#00ffff"/><rect x="398" y="56" width="1" height="1" fill="#ffffff"/><rect x="399" y="56" width="1" height="1" fill="#00ffff"/><rect x="400" y="56" width="4" height="1" fill="#000000"/><rect x="392" y="57" width="1" height="1" fill="#000000"/><rect x="393" y="57" width="2" height="1" fill="#00ffff"/><rect x="395" y="57" width="1" height="1" fill="#ffffff"/><rect x="396" y="57" width="1" height="1" fill="#00ffff"/><rect x="397" y="57" width="1" height="1" fill="#ffffff"/><rect x="398" y="57" width="1" height="1" fill="#00ffff"/><rect x="399" y="57" width="1" height="1" fill="#ffffff"/><rect x="400" y="57" width="1" height="1" fill="#000000"/><rect x="392" y="58" width="1" height="1" fill="#000000"/><rect x="393" y="58" width="1" height="1" fill="#ffffff"/><rect x="394" y="58" width="1" height="1" fill="#00ffff"/><rect x="395" y="58" width="1" height="1" fill="#ffffff"/><rect x="396" y="58" width="1" height="1" fill="#00ffff"/><rect x="397" y="58" width="1" height="1" fill="#ffffff"/><rect x="398" y="58" width="1" height="1" fill="#00ffff"/><rect x="399" y="58" width="1" height="1" fill="#ffffff"/><rect x="400" y="58" width="1" height="1" fill="#000000"/><rect x="392" y="59" width="3" height="1" fill="#000000"/><rect x="395" y="59" width="1" height="1" fill="#00ffff"/><rect x="396" y="59" width="1" height="1" fill="#ffffff"/><rect x="397" y="59" width="1" height="1" fill="#00ffff"/><rect x="398" y="59" width="1" height="1" fill="#ffffff"/><rect x="399" y="59" width="1" height="1" fill="#00ffff"/><rect x="400" y="59" width="1" height="1" fill="#000000"/><rect x="392" y="60" width="1" height="1" fill="#000000"/><rect x="393" y="60" width="1" height="1" fill="#00ffff"/><rect x="394" y="60" width="1" height="1" fill="#ffffff"/><rect x="395" y="60" width="1" height="1" fill="#00ffff"/><rect x="396" y="60" width="1" height="1" fill="#ffffff"/><rect x="397" y="60" width="1" height="1" fill="#00ffff"/><rect x="398" y="60" width="1" height="1" fill="#ffffff"/><rect x="399" y="60" width="1" height="1" fill="#00ffff"/><rect x="400" y="60" width="1" height="1" fill="#000000"/><rect x="393" y="61" width="7" height="1" fill="#000000"/><rect x="444" y="49" width="6" height="1" fill="#a0a0a0"/><rect x="444" y="50" width="1" height="1" fill="#a0a0a0"/><rect x="446" y="50" width="1" height="1" fill="#a0a0a0"/><rect x="448" y="50" width="1" height="1" fill="#a0a0a0"/><rect x="450" y="50" width="2" height="1" fill="#a0a0a0"/><rect x="444" y="51" width="2" height="1" fill="#a0a0a0"/><rect x="447" y="51" width="1" height="1" fill="#a0a0a0"/><rect x="449" y="51" width="1" height="1" fill="#a0a0a0"/><rect x="451" y="51" width="2" height="1" fill="#a0a0a0"/><rect x="444" y="52" width="1" height="1" fill="#a0a0a0"/><rect x="446" y="52" width="1" height="1" fill="#a0a0a0"/><rect x="448" y="52" width="1" height="1" fill="#a0a0a0"/><rect x="450" y="52" width="1" height="1" fill="#a0a0a0"/><rect x="452" y="52" width="1" height="1" fill="#a0a0a0"/><rect x="444" y="53" width="2" height="1" fill="#a0a0a0"/><rect x="447" y="53" width="1" height="1" fill="#a0a0a0"/><rect x="449" y="53" width="1" height="1" fill="#a0a0a0"/><rect x="451" y="53" width="2" height="1" fill="#a0a0a0"/><rect x="444" y="54" width="1" height="1" fill="#a0a0a0"/><rect x="446" y="54" width="1" height="1" fill="#a0a0a0"/><rect x="448" y="54" width="1" height="1" fill="#a0a0a0"/><rect x="450" y="54" width="1" height="1" fill="#a0a0a0"/><rect x="452" y="54" width="1" height="1" fill="#a0a0a0"/><rect x="444" y="55" width="2" height="1" fill="#a0a0a0"/><rect x="447" y="55" width="10" height="1" fill="#a0a0a0"/><rect x="444" y="56" width="1" height="1" fill="#a0a0a0"/><rect x="446" y="56" width="1" height="1" fill="#a0a0a0"/><rect x="456" y="56" width="2" height="1" fill="#a0a0a0"/><rect x="444" y="57" width="3" height="1" fill="#a0a0a0"/><rect x="449" y="57" width="6" height="1" fill="#a0a0a0"/><rect x="457" y="57" width="1" height="1" fill="#a0a0a0"/><rect x="446" y="58" width="1" height="1" fill="#a0a0a0"/><rect x="449" y="58" width="6" height="1" fill="#a0a0a0"/><rect x="457" y="58" width="1" height="1" fill="#a0a0a0"/><rect x="446" y="59" width="2" height="1" fill="#a0a0a0"/><rect x="456" y="59" width="2" height="1" fill="#a0a0a0"/><rect x="447" y="60" width="10" height="1" fill="#a0a0a0"/><rect x="470" y="48" width="1" height="1" fill="#b0b0b0"/><rect x="467" y="49" width="1" height="1" fill="#ffff00"/><rect x="469" y="49" width="1" height="1" fill="#ffff00"/><rect x="471" y="49" width="7" height="1" fill="#000000"/><rect x="468" y="50" width="2" height="1" fill="#ffff00"/><rect x="470" y="50" width="1" height="1" fill="#000000"/><rect x="471" y="50" width="1" height="1" fill="#00ffff"/><rect x="472" y="50" width="1" height="1" fill="#ffffff"/><rect x="473" y="50" width="1" height="1" fill="#00ffff"/><rect x="474" y="50" width="1" height="1" fill="#ffffff"/><rect x="475" y="50" width="1" height="1" fill="#00ffff"/><rect x="476" y="50" width="1" height="1" fill="#ffffff"/><rect x="477" y="50" width="1" height="1" fill="#00ffff"/><rect x="478" y="50" width="1" height="1" fill="#000000"/><rect x="467" y="51" width="1" height="1" fill="#ffff00"/><rect x="469" y="51" width="1" height="1" fill="#ffff00"/><rect x="470" y="51" width="1" height="1" fill="#ffffff"/><rect x="471" y="51" width="1" height="1" fill="#00ffff"/><rect x="472" y="51" width="1" height="1" fill="#ffffff"/><rect x="473" y="51" width="1" height="1" fill="#00ffff"/><rect x="474" y="51" width="1" height="1" fill="#ffffff"/><rect x="475" y="51" width="1" height="1" fill="#00ffff"/><rect x="476" y="51" width="1" height="1" fill="#ffffff"/><rect x="477" y="51" width="1" height="1" fill="#00ffff"/><rect x="478" y="51" width="1" height="1" fill="#000000"/><rect x="469" y="52" width="1" height="1" fill="#ffff00"/><rect x="470" y="52" width="1" height="1" fill="#00ffff"/><rect x="471" y="52" width="1" height="1" fill="#ffffff"/><rect x="472" y="52" width="1" height="1" fill="#ffff00"/><rect x="473" y="52" width="1" height="1" fill="#ffffff"/><rect x="474" y="52" width="1" height="1" fill="#00ffff"/><rect x="475" y="52" width="1" height="1" fill="#ffffff"/><rect x="476" y="52" width="1" height="1" fill="#00ffff"/><rect x="477" y="52" width="1" height="1" fill="#ffffff"/><rect x="478" y="52" width="3" height="1" fill="#000000"/><rect x="467" y="53" width="3" height="1" fill="#ffff00"/><rect x="470" y="53" width="1" height="1" fill="#ffffff"/><rect x="471" y="53" width="1" height="1" fill="#00ffff"/><rect x="472" y="53" width="1" height="1" fill="#ffffff"/><rect x="473" y="53" width="1" height="1" fill="#ffff00"/><rect x="474" y="53" width="1" height="1" fill="#ffffff"/><rect x="475" y="53" width="1" height="1" fill="#00ffff"/><rect x="476" y="53" width="1" height="1" fill="#ffffff"/><rect x="477" y="53" width="1" height="1" fill="#00ffff"/><rect x="478" y="53" width="1" height="1" fill="#ffffff"/><rect x="479" y="53" width="1" height="1" fill="#00ffff"/><rect x="480" y="53" width="1" height="1" fill="#ffffff"/><rect x="481" y="53" width="1" height="1" fill="#000000"/><rect x="468" y="54" width="2" height="1" fill="#ffff00"/><rect x="470" y="54" width="1" height="1" fill="#00ffff"/><rect x="471" y="54" width="1" height="1" fill="#ffffff"/><rect x="472" y="54" width="1" height="1" fill="#00ffff"/><rect x="473" y="54" width="1" height="1" fill="#ffff00"/><rect x="474" y="54" width="1" height="1" fill="#00ffff"/><rect x="475" y="54" width="1" height="1" fill="#ffffff"/><rect x="476" y="54" width="1" height="1" fill="#00ffff"/><rect x="477" y="54" width="1" height="1" fill="#ffffff"/><rect x="478" y="54" width="1" height="1" fill="#00ffff"/><rect x="479" y="54" width="1" height="1" fill="#ffffff"/><rect x="480" y="54" width="1" height="1" fill="#00ffff"/><rect x="481" y="54" width="1" height="1" fill="#000000"/><rect x="469" y="55" width="1" height="1" fill="#ffff00"/><rect x="470" y="55" width="1" height="1" fill="#ffffff"/><rect x="471" y="55" width="1" height="1" fill="#00ffff"/><rect x="472" y="55" width="1" height="1" fill="#ffff00"/><rect x="473" y="55" width="1" height="1" fill="#00ffff"/><rect x="474" y="55" width="1" height="1" fill="#ffffff"/><rect x="475" y="55" width="1" height="1" fill="#00ffff"/><rect x="476" y="55" width="1" height="1" fill="#ffffff"/><rect x="477" y="55" width="1" height="1" fill="#00ffff"/><rect x="478" y="55" width="1" height="1" fill="#ffffff"/><rect x="479" y="55" width="1" height="1" fill="#00ffff"/><rect x="480" y="55" width="1" height="1" fill="#ffffff"/><rect x="481" y="55" width="1" height="1" fill="#000000"/><rect x="468" y="56" width="2" height="1" fill="#ffff00"/><rect x="470" y="56" width="1" height="1" fill="#00ffff"/><rect x="471" y="56" width="1" height="1" fill="#ffffff"/><rect x="472" y="56" width="1" height="1" fill="#00ffff"/><rect x="473" y="56" width="1" height="1" fill="#ffffff"/><rect x="474" y="56" width="1" height="1" fill="#00ffff"/><rect x="475" y="56" width="1" height="1" fill="#ffffff"/><rect x="476" y="56" width="1" height="1" fill="#00ffff"/><rect x="477" y="56" width="1" height="1" fill="#ffffff"/><rect x="478" y="56" width="3" height="1" fill="#000000"/><rect x="469" y="57" width="1" height="1" fill="#000000"/><rect x="470" y="57" width="1" height="1" fill="#ffffff"/><rect x="471" y="57" width="1" height="1" fill="#00ffff"/><rect x="472" y="57" width="1" height="1" fill="#ffffff"/><rect x="473" y="57" width="1" height="1" fill="#00ffff"/><rect x="474" y="57" width="1" height="1" fill="#ffffff"/><rect x="475" y="57" width="1" height="1" fill="#00ffff"/><rect x="476" y="57" width="1" height="1" fill="#ffffff"/><rect x="477" y="57" width="1" height="1" fill="#00ffff"/><rect x="478" y="57" width="1" height="1" fill="#000000"/><rect x="469" y="58" width="4" height="1" fill="#000000"/><rect x="473" y="58" width="1" height="1" fill="#ffffff"/><rect x="474" y="58" width="1" height="1" fill="#00ffff"/><rect x="475" y="58" width="1" height="1" fill="#ffffff"/><rect x="476" y="58" width="3" height="1" fill="#000000"/><rect x="473" y="59" width="1" height="1" fill="#000000"/><rect x="474" y="59" width="1" height="1" fill="#00ffff"/><rect x="475" y="59" width="1" height="1" fill="#ffffff"/><rect x="476" y="59" width="1" height="1" fill="#000000"/><rect x="473" y="60" width="1" height="1" fill="#000000"/><rect x="474" y="60" width="1" height="1" fill="#ffffff"/><rect x="475" y="60" width="1" height="1" fill="#00ffff"/><rect x="476" y="60" width="1" height="1" fill="#000000"/><rect x="474" y="61" width="2" height="1" fill="#000000"/><rect x="489" y="49" width="16" height="1" fill="#000000"/><rect x="489" y="50" width="1" height="1" fill="#000000"/><rect x="490" y="50" width="14" height="1" fill="#000080"/><rect x="504" y="50" width="1" height="1" fill="#000000"/><rect x="489" y="51" width="1" height="1" fill="#000000"/><rect x="490" y="51" width="14" height="1" fill="#000080"/><rect x="504" y="51" width="1" height="1" fill="#000000"/><rect x="489" y="52" width="1" height="1" fill="#000000"/><rect x="490" y="52" width="14" height="1" fill="#ffffff"/><rect x="504" y="52" width="1" height="1" fill="#000000"/><rect x="489" y="53" width="1" height="1" fill="#000000"/><rect x="490" y="53" width="3" height="1" fill="#ffffff"/><rect x="493" y="53" width="1" height="1" fill="#d8d8d8"/><rect x="494" y="53" width="3" height="1" fill="#ffffff"/><rect x="497" y="53" width="1" height="1" fill="#d8d8d8"/><rect x="498" y="53" width="3" height="1" fill="#ffffff"/><rect x="501" y="53" width="1" height="1" fill="#d8d8d8"/><rect x="502" y="53" width="2" height="1" fill="#ffffff"/><rect x="504" y="53" width="1" height="1" fill="#000000"/><rect x="489" y="54" width="1" height="1" fill="#000000"/><rect x="490" y="54" width="14" height="1" fill="#d8d8d8"/><rect x="504" y="54" width="1" height="1" fill="#000000"/><rect x="489" y="55" width="1" height="1" fill="#000000"/><rect x="490" y="55" width="3" height="1" fill="#ffffff"/><rect x="493" y="55" width="1" height="1" fill="#d8d8d8"/><rect x="494" y="55" width="3" height="1" fill="#ffffff"/><rect x="497" y="55" width="1" height="1" fill="#d8d8d8"/><rect x="498" y="55" width="3" height="1" fill="#ffffff"/><rect x="501" y="55" width="1" height="1" fill="#d8d8d8"/><rect x="502" y="55" width="2" height="1" fill="#ffffff"/><rect x="504" y="55" width="1" height="1" fill="#000000"/><rect x="489" y="56" width="1" height="1" fill="#000000"/><rect x="490" y="56" width="3" height="1" fill="#ffffff"/><rect x="493" y="56" width="1" height="1" fill="#d8d8d8"/><rect x="494" y="56" width="3" height="1" fill="#ffffff"/><rect x="497" y="56" width="1" height="1" fill="#d8d8d8"/><rect x="498" y="56" width="3" height="1" fill="#ffffff"/><rect x="501" y="56" width="1" height="1" fill="#d8d8d8"/><rect x="502" y="56" width="2" height="1" fill="#ffffff"/><rect x="504" y="56" width="1" height="1" fill="#000000"/><rect x="489" y="57" width="1" height="1" fill="#000000"/><rect x="490" y="57" width="14" height="1" fill="#d8d8d8"/><rect x="504" y="57" width="1" height="1" fill="#000000"/><rect x="489" y="58" width="1" height="1" fill="#000000"/><rect x="490" y="58" width="3" height="1" fill="#ffffff"/><rect x="493" y="58" width="1" height="1" fill="#d8d8d8"/><rect x="494" y="58" width="3" height="1" fill="#ffffff"/><rect x="497" y="58" width="1" height="1" fill="#d8d8d8"/><rect x="498" y="58" width="3" height="1" fill="#ffffff"/><rect x="501" y="58" width="1" height="1" fill="#d8d8d8"/><rect x="502" y="58" width="2" height="1" fill="#ffffff"/><rect x="504" y="58" width="1" height="1" fill="#000000"/><rect x="489" y="59" width="1" height="1" fill="#000000"/><rect x="490" y="59" width="3" height="1" fill="#ffffff"/><rect x="493" y="59" width="1" height="1" fill="#d8d8d8"/><rect x="494" y="59" width="3" height="1" fill="#ffffff"/><rect x="497" y="59" width="1" height="1" fill="#d8d8d8"/><rect x="498" y="59" width="3" height="1" fill="#ffffff"/><rect x="501" y="59" width="1" height="1" fill="#d8d8d8"/><rect x="502" y="59" width="2" height="1" fill="#ffffff"/><rect x="504" y="59" width="1" height="1" fill="#000000"/><rect x="489" y="60" width="1" height="1" fill="#000000"/><rect x="490" y="60" width="14" height="1" fill="#ffffff"/><rect x="504" y="60" width="1" height="1" fill="#000000"/><rect x="489" y="61" width="16" height="1" fill="#000000"/><rect x="590" y="49" width="11" height="1" fill="#000000"/><rect x="589" y="50" width="1" height="1" fill="#000000"/><rect x="590" y="50" width="1" height="1" fill="#ffffff"/><rect x="591" y="50" width="1" height="1" fill="#ffff00"/><rect x="592" y="50" width="3" height="1" fill="#ffffff"/><rect x="595" y="50" width="1" height="1" fill="#ffff00"/><rect x="596" y="50" width="3" height="1" fill="#ffffff"/><rect x="599" y="50" width="1" height="1" fill="#ffff00"/><rect x="600" y="50" width="1" height="1" fill="#ffffff"/><rect x="601" y="50" width="1" height="1" fill="#000000"/><rect x="589" y="51" width="1" height="1" fill="#000000"/><rect x="590" y="51" width="1" height="1" fill="#ffff00"/><rect x="591" y="51" width="9" height="1" fill="#ffffff"/><rect x="600" y="51" width="1" height="1" fill="#ffff00"/><rect x="601" y="51" width="1" height="1" fill="#000000"/><rect x="602" y="51" width="1" height="1" fill="#909090"/><rect x="589" y="52" width="1" height="1" fill="#000000"/><rect x="590" y="52" width="3" height="1" fill="#ffffff"/><rect x="593" y="52" width="5" height="1" fill="#000080"/><rect x="598" y="52" width="3" height="1" fill="#ffffff"/><rect x="601" y="52" width="1" height="1" fill="#000000"/><rect x="602" y="52" width="1" height="1" fill="#909090"/><rect x="589" y="53" width="1" height="1" fill="#000000"/><rect x="590" y="53" width="1" height="1" fill="#ffff00"/><rect x="591" y="53" width="1" height="1" fill="#ffffff"/><rect x="592" y="53" width="2" height="1" fill="#000080"/><rect x="594" y="53" width="3" height="1" fill="#ffffff"/><rect x="597" y="53" width="2" height="1" fill="#000080"/><rect x="599" y="53" width="1" height="1" fill="#ffffff"/><rect x="600" y="53" width="1" height="1" fill="#ffff00"/><rect x="601" y="53" width="1" height="1" fill="#000000"/><rect x="602" y="53" width="1" height="1" fill="#909090"/><rect x="589" y="54" width="1" height="1" fill="#000000"/><rect x="590" y="54" width="7" height="1" fill="#ffffff"/><rect x="597" y="54" width="2" height="1" fill="#000080"/><rect x="599" y="54" width="2" height="1" fill="#ffffff"/><rect x="601" y="54" width="1" height="1" fill="#000000"/><rect x="602" y="54" width="1" height="1" fill="#909090"/><rect x="589" y="55" width="1" height="1" fill="#000000"/><rect x="590" y="55" width="1" height="1" fill="#ffff00"/><rect x="591" y="55" width="5" height="1" fill="#ffffff"/><rect x="596" y="55" width="2" height="1" fill="#000080"/><rect x="598" y="55" width="2" height="1" fill="#ffffff"/><rect x="600" y="55" width="1" height="1" fill="#ffff00"/><rect x="601" y="55" width="1" height="1" fill="#000000"/><rect x="602" y="55" width="1" height="1" fill="#909090"/><rect x="589" y="56" width="1" height="1" fill="#000000"/><rect x="590" y="56" width="5" height="1" fill="#ffffff"/><rect x="595" y="56" width="2" height="1" fill="#000080"/><rect x="597" y="56" width="4" height="1" fill="#ffffff"/><rect x="601" y="56" width="1" height="1" fill="#000000"/><rect x="602" y="56" width="1" height="1" fill="#909090"/><rect x="589" y="57" width="1" height="1" fill="#000000"/><rect x="590" y="57" width="1" height="1" fill="#ffff00"/><rect x="591" y="57" width="4" height="1" fill="#ffffff"/><rect x="595" y="57" width="2" height="1" fill="#000080"/><rect x="597" y="57" width="3" height="1" fill="#ffffff"/><rect x="600" y="57" width="1" height="1" fill="#ffff00"/><rect x="601" y="57" width="1" height="1" fill="#000000"/><rect x="602" y="57" width="1" height="1" fill="#909090"/><rect x="589" y="58" width="1" height="1" fill="#000000"/><rect x="590" y="58" width="11" height="1" fill="#ffffff"/><rect x="601" y="58" width="1" height="1" fill="#000000"/><rect x="602" y="58" width="1" height="1" fill="#909090"/><rect x="589" y="59" width="1" height="1" fill="#000000"/><rect x="590" y="59" width="1" height="1" fill="#ffff00"/><rect x="591" y="59" width="4" height="1" fill="#ffffff"/><rect x="595" y="59" width="2" height="1" fill="#000080"/><rect x="597" y="59" width="3" height="1" fill="#ffffff"/><rect x="600" y="59" width="1" height="1" fill="#ffff00"/><rect x="601" y="59" width="1" height="1" fill="#000000"/><rect x="602" y="59" width="1" height="1" fill="#909090"/><rect x="589" y="60" width="1" height="1" fill="#000000"/><rect x="590" y="60" width="1" height="1" fill="#ffffff"/><rect x="591" y="60" width="1" height="1" fill="#ffff00"/><rect x="592" y="60" width="3" height="1" fill="#ffffff"/><rect x="595" y="60" width="1" height="1" fill="#ffff00"/><rect x="596" y="60" width="3" height="1" fill="#ffffff"/><rect x="599" y="60" width="1" height="1" fill="#ffff00"/><rect x="600" y="60" width="1" height="1" fill="#ffffff"/><rect x="601" y="60" width="1" height="1" fill="#000000"/><rect x="602" y="60" width="1" height="1" fill="#909090"/><rect x="590" y="61" width="8" height="1" fill="#000000"/><rect x="598" y="61" width="1" height="1" fill="#ffffff"/><rect x="599" y="61" width="3" height="1" fill="#000000"/><rect x="602" y="61" width="1" height="1" fill="#909090"/><rect x="591" y="62" width="6" height="1" fill="#909090"/><rect x="597" y="62" width="1" height="1" fill="#000000"/><rect x="598" y="62" width="1" height="1" fill="#ffffff"/><rect x="599" y="62" width="1" height="1" fill="#000000"/><rect x="600" y="62" width="3" height="1" fill="#909090"/><rect x="597" y="63" width="2" height="1" fill="#000000"/><rect x="624" y="49" width="3" height="1" fill="#000000"/><rect x="637" y="49" width="3" height="1" fill="#000000"/><rect x="624" y="50" width="1" height="1" fill="#000000"/><rect x="639" y="50" width="1" height="1" fill="#000000"/><rect x="624" y="51" width="1" height="1" fill="#000000"/><rect x="627" y="51" width="2" height="1" fill="#000000"/><rect x="631" y="51" width="2" height="1" fill="#000000"/><rect x="635" y="51" width="2" height="1" fill="#000000"/><rect x="639" y="51" width="1" height="1" fill="#000000"/><rect x="624" y="52" width="1" height="1" fill="#000000"/><rect x="627" y="52" width="2" height="1" fill="#000000"/><rect x="631" y="52" width="2" height="1" fill="#000000"/><rect x="635" y="52" width="2" height="1" fill="#000000"/><rect x="639" y="52" width="1" height="1" fill="#000000"/><rect x="624" y="53" width="1" height="1" fill="#000000"/><rect x="639" y="53" width="1" height="1" fill="#000000"/><rect x="624" y="54" width="1" height="1" fill="#000000"/><rect x="639" y="54" width="1" height="1" fill="#000000"/><rect x="624" y="55" width="1" height="1" fill="#000000"/><rect x="627" y="55" width="2" height="1" fill="#000000"/><rect x="631" y="55" width="2" height="1" fill="#000000"/><rect x="635" y="55" width="2" height="1" fill="#000000"/><rect x="639" y="55" width="1" height="1" fill="#000000"/><rect x="624" y="56" width="1" height="1" fill="#000000"/><rect x="627" y="56" width="2" height="1" fill="#000000"/><rect x="631" y="56" width="2" height="1" fill="#000000"/><rect x="635" y="56" width="2" height="1" fill="#000000"/><rect x="639" y="56" width="1" height="1" fill="#000000"/><rect x="624" y="57" width="1" height="1" fill="#000000"/><rect x="639" y="57" width="1" height="1" fill="#000000"/><rect x="624" y="58" width="1" height="1" fill="#000000"/><rect x="639" y="58" width="1" height="1" fill="#000000"/><rect x="624" y="59" width="1" height="1" fill="#000000"/><rect x="627" y="59" width="2" height="1" fill="#000000"/><rect x="631" y="59" width="2" height="1" fill="#000000"/><rect x="635" y="59" width="2" height="1" fill="#000000"/><rect x="639" y="59" width="1" height="1" fill="#000000"/><rect x="624" y="60" width="1" height="1" fill="#000000"/><rect x="627" y="60" width="2" height="1" fill="#000000"/><rect x="631" y="60" width="2" height="1" fill="#000000"/><rect x="635" y="60" width="2" height="1" fill="#000000"/><rect x="639" y="60" width="1" height="1" fill="#000000"/><rect x="624" y="61" width="1" height="1" fill="#000000"/><rect x="639" y="61" width="1" height="1" fill="#000000"/><rect x="624" y="62" width="3" height="1" fill="#000000"/><rect x="637" y="62" width="3" height="1" fill="#000000"/><rect x="650" y="51" width="1" height="1" fill="#000000"/><rect x="657" y="51" width="1" height="1" fill="#000000"/><rect x="651" y="52" width="1" height="1" fill="#000000"/><rect x="656" y="52" width="1" height="1" fill="#000000"/><rect x="652" y="53" width="1" height="1" fill="#000000"/><rect x="655" y="53" width="1" height="1" fill="#000000"/><rect x="653" y="54" width="2" height="1" fill="#000000"/><rect x="653" y="55" width="2" height="1" fill="#000000"/><rect x="652" y="56" width="1" height="1" fill="#000000"/><rect x="655" y="56" width="1" height="1" fill="#000000"/><rect x="651" y="57" width="1" height="1" fill="#000000"/><rect x="656" y="57" width="1" height="1" fill="#000000"/><rect x="650" y="58" width="1" height="1" fill="#000000"/><rect x="657" y="58" width="1" height="1" fill="#000000"/><rect x="658" y="58" width="1" height="1" fill="#303030"/><rect x="660" y="58" width="2" height="1" fill="#303030"/><rect x="658" y="59" width="2" height="1" fill="#303030"/><rect x="661" y="59" width="1" height="1" fill="#303030"/><rect x="658" y="60" width="1" height="1" fill="#303030"/><rect x="661" y="60" width="1" height="1" fill="#303030"/><rect x="658" y="61" width="1" height="1" fill="#303030"/><rect x="661" y="61" width="1" height="1" fill="#303030"/><rect x="658" y="62" width="1" height="1" fill="#303030"/><rect x="661" y="62" width="1" height="1" fill="#303030"/><rect x="672" y="54" width="1" height="1" fill="#000000"/><rect x="679" y="54" width="1" height="1" fill="#000000"/><rect x="673" y="55" width="1" height="1" fill="#000000"/><rect x="678" y="55" width="1" height="1" fill="#000000"/><rect x="674" y="56" width="1" height="1" fill="#000000"/><rect x="677" y="56" width="1" height="1" fill="#000000"/><rect x="675" y="57" width="2" height="1" fill="#000000"/><rect x="675" y="58" width="2" height="1" fill="#000000"/><rect x="674" y="59" width="1" height="1" fill="#000000"/><rect x="677" y="59" width="1" height="1" fill="#000000"/><rect x="673" y="60" width="1" height="1" fill="#000000"/><rect x="678" y="60" width="1" height="1" fill="#000000"/><rect x="672" y="61" width="1" height="1" fill="#000000"/><rect x="679" y="61" width="1" height="1" fill="#000000"/><rect x="679" y="52" width="4" height="1" fill="#000000"/><rect x="685" y="49" width="1" height="1" fill="#000000"/><rect x="684" y="50" width="2" height="1" fill="#000000"/><rect x="685" y="51" width="1" height="1" fill="#000000"/><rect x="685" y="52" width="1" height="1" fill="#000000"/><rect x="685" y="53" width="1" height="1" fill="#000000"/><rect x="685" y="54" width="1" height="1" fill="#000000"/><rect x="695" y="50" width="1" height="1" fill="#000000"/><rect x="705" y="50" width="1" height="1" fill="#000000"/><rect x="695" y="51" width="1" height="1" fill="#000000"/><rect x="705" y="51" width="1" height="1" fill="#000000"/><rect x="695" y="52" width="1" height="1" fill="#000000"/><rect x="705" y="52" width="1" height="1" fill="#000000"/><rect x="695" y="53" width="1" height="1" fill="#000000"/><rect x="705" y="53" width="1" height="1" fill="#000000"/><rect x="695" y="54" width="1" height="1" fill="#000000"/><rect x="705" y="54" width="1" height="1" fill="#000000"/><rect x="695" y="55" width="1" height="1" fill="#000000"/><rect x="705" y="55" width="1" height="1" fill="#000000"/><rect x="695" y="56" width="1" height="1" fill="#000000"/><rect x="705" y="56" width="1" height="1" fill="#000000"/><rect x="695" y="57" width="1" height="1" fill="#000000"/><rect x="705" y="57" width="1" height="1" fill="#000000"/><rect x="695" y="58" width="1" height="1" fill="#000000"/><rect x="705" y="58" width="1" height="1" fill="#000000"/><rect x="695" y="59" width="1" height="1" fill="#000000"/><rect x="705" y="59" width="1" height="1" fill="#000000"/><rect x="695" y="60" width="1" height="1" fill="#000000"/><rect x="705" y="60" width="1" height="1" fill="#000000"/><rect x="698" y="53" width="1" height="1" fill="#000000"/><rect x="703" y="53" width="1" height="1" fill="#000000"/><rect x="699" y="54" width="1" height="1" fill="#000000"/><rect x="702" y="54" width="1" height="1" fill="#000000"/><rect x="700" y="55" width="2" height="1" fill="#000000"/><rect x="700" y="56" width="2" height="1" fill="#000000"/><rect x="699" y="57" width="1" height="1" fill="#000000"/><rect x="702" y="57" width="1" height="1" fill="#000000"/><rect x="698" y="58" width="1" height="1" fill="#000000"/><rect x="703" y="58" width="1" height="1" fill="#000000"/><rect x="20" y="79" width="1" height="1" fill="#000000"/><rect x="20" y="80" width="1" height="1" fill="#000000"/><rect x="18" y="81" width="3" height="1" fill="#000000"/><rect x="18" y="82" width="1" height="1" fill="#000000"/><rect x="20" y="82" width="1" height="1" fill="#000000"/><rect x="18" y="83" width="3" height="1" fill="#000000"/><rect x="14" y="85" width="12" height="1" fill="#000000"/><rect x="17" y="87" width="1" height="1" fill="#000000"/><rect x="15" y="88" width="3" height="1" fill="#000000"/><rect x="15" y="89" width="1" height="1" fill="#000000"/><rect x="17" y="89" width="1" height="1" fill="#000000"/><rect x="15" y="90" width="3" height="1" fill="#000000"/><rect x="20" y="87" width="1" height="1" fill="#000000"/><rect x="23" y="87" width="1" height="1" fill="#000000"/><rect x="21" y="88" width="2" height="1" fill="#000000"/><rect x="21" y="89" width="2" height="1" fill="#000000"/><rect x="20" y="90" width="1" height="1" fill="#000000"/><rect x="23" y="90" width="1" height="1" fill="#000000"/><rect x="42" y="79" width="1" height="1" fill="#000000"/><rect x="42" y="80" width="1" height="1" fill="#000000"/><rect x="40" y="81" width="3" height="1" fill="#000000"/><rect x="40" y="82" width="1" height="1" fill="#000000"/><rect x="42" y="82" width="1" height="1" fill="#000000"/><rect x="40" y="83" width="3" height="1" fill="#000000"/><rect x="44" y="78" width="3" height="1" fill="#000000"/><rect x="44" y="79" width="1" height="1" fill="#000000"/><rect x="46" y="79" width="1" height="1" fill="#000000"/><rect x="44" y="80" width="1" height="1" fill="#000000"/><rect x="46" y="80" width="1" height="1" fill="#000000"/><rect x="36" y="85" width="14" height="1" fill="#000000"/><rect x="39" y="88" width="1" height="1" fill="#000000"/><rect x="39" y="89" width="1" height="1" fill="#000000"/><rect x="37" y="90" width="3" height="1" fill="#000000"/><rect x="37" y="91" width="1" height="1" fill="#000000"/><rect x="39" y="91" width="1" height="1" fill="#000000"/><rect x="37" y="92" width="3" height="1" fill="#000000"/><rect x="42" y="89" width="1" height="1" fill="#000000"/><rect x="45" y="89" width="1" height="1" fill="#000000"/><rect x="43" y="90" width="2" height="1" fill="#000000"/><rect x="43" y="91" width="2" height="1" fill="#000000"/><rect x="42" y="92" width="1" height="1" fill="#000000"/><rect x="45" y="92" width="1" height="1" fill="#000000"/><rect x="47" y="88" width="3" height="1" fill="#000000"/><rect x="47" y="89" width="1" height="1" fill="#000000"/><rect x="49" y="89" width="1" height="1" fill="#000000"/><rect x="47" y="90" width="1" height="1" fill="#000000"/><rect x="49" y="90" width="1" height="1" fill="#000000"/><rect x="61" y="83" width="3" height="1" fill="#000000"/><rect x="67" y="83" width="3" height="1" fill="#000000"/><rect x="60" y="84" width="1" height="1" fill="#000000"/><rect x="64" y="84" width="1" height="1" fill="#000000"/><rect x="66" y="84" width="1" height="1" fill="#000000"/><rect x="70" y="84" width="1" height="1" fill="#000000"/><rect x="60" y="85" width="1" height="1" fill="#000000"/><rect x="65" y="85" width="1" height="1" fill="#000000"/><rect x="70" y="85" width="1" height="1" fill="#000000"/><rect x="60" y="86" width="1" height="1" fill="#000000"/><rect x="64" y="86" width="1" height="1" fill="#000000"/><rect x="66" y="86" width="1" height="1" fill="#000000"/><rect x="70" y="86" width="1" height="1" fill="#000000"/><rect x="61" y="87" width="3" height="1" fill="#000000"/><rect x="67" y="87" width="3" height="1" fill="#000000"/><rect x="86" y="77" width="2" height="1" fill="#000000"/><rect x="85" y="78" width="2" height="1" fill="#000000"/><rect x="88" y="78" width="1" height="1" fill="#000000"/><rect x="85" y="79" width="2" height="1" fill="#000000"/><rect x="88" y="79" width="3" height="1" fill="#000000"/><rect x="85" y="80" width="2" height="1" fill="#000000"/><rect x="88" y="80" width="1" height="1" fill="#000000"/><rect x="90" y="80" width="1" height="1" fill="#000000"/><rect x="85" y="81" width="2" height="1" fill="#000000"/><rect x="88" y="81" width="3" height="1" fill="#000000"/><rect x="85" y="82" width="2" height="1" fill="#000000"/><rect x="85" y="83" width="2" height="1" fill="#000000"/><rect x="85" y="84" width="2" height="1" fill="#000000"/><rect x="85" y="85" width="2" height="1" fill="#000000"/><rect x="85" y="86" width="2" height="1" fill="#000000"/><rect x="85" y="87" width="2" height="1" fill="#000000"/><rect x="85" y="88" width="2" height="1" fill="#000000"/><rect x="88" y="88" width="3" height="1" fill="#000000"/><rect x="85" y="89" width="2" height="1" fill="#000000"/><rect x="90" y="89" width="1" height="1" fill="#000000"/><rect x="83" y="90" width="1" height="1" fill="#000000"/><rect x="85" y="90" width="2" height="1" fill="#000000"/><rect x="88" y="90" width="3" height="1" fill="#000000"/><rect x="84" y="91" width="2" height="1" fill="#000000"/><rect x="88" y="91" width="1" height="1" fill="#000000"/><rect x="90" y="91" width="1" height="1" fill="#000000"/><rect x="84" y="92" width="1" height="1" fill="#000000"/><rect x="88" y="92" width="3" height="1" fill="#000000"/><rect x="109" y="77" width="5" height="1" fill="#000000"/><rect x="109" y="78" width="1" height="1" fill="#000000"/><rect x="111" y="78" width="1" height="1" fill="#000000"/><rect x="113" y="78" width="1" height="1" fill="#000000"/><rect x="109" y="79" width="1" height="1" fill="#000000"/><rect x="111" y="79" width="1" height="1" fill="#000000"/><rect x="113" y="79" width="1" height="1" fill="#000000"/><rect x="106" y="81" width="10" height="1" fill="#000000"/><rect x="107" y="82" width="2" height="1" fill="#000000"/><rect x="114" y="82" width="2" height="1" fill="#000000"/><rect x="108" y="83" width="2" height="1" fill="#000000"/><rect x="115" y="83" width="1" height="1" fill="#000000"/><rect x="109" y="84" width="3" height="1" fill="#000000"/><rect x="109" y="85" width="3" height="1" fill="#000000"/><rect x="108" y="86" width="2" height="1" fill="#000000"/><rect x="115" y="86" width="1" height="1" fill="#000000"/><rect x="107" y="87" width="2" height="1" fill="#000000"/><rect x="114" y="87" width="2" height="1" fill="#000000"/><rect x="106" y="88" width="10" height="1" fill="#000000"/><rect x="107" y="90" width="3" height="1" fill="#000000"/><rect x="111" y="90" width="3" height="1" fill="#000000"/><rect x="115" y="90" width="1" height="1" fill="#000000"/><rect x="107" y="91" width="1" height="1" fill="#000000"/><rect x="109" y="91" width="1" height="1" fill="#000000"/><rect x="115" y="91" width="1" height="1" fill="#000000"/><rect x="107" y="92" width="1" height="1" fill="#000000"/><rect x="109" y="92" width="1" height="1" fill="#000000"/><rect x="111" y="92" width="3" height="1" fill="#000000"/><rect x="115" y="92" width="1" height="1" fill="#000000"/><rect x="132" y="77" width="5" height="1" fill="#000000"/><rect x="132" y="78" width="1" height="1" fill="#000000"/><rect x="134" y="78" width="1" height="1" fill="#000000"/><rect x="136" y="78" width="1" height="1" fill="#000000"/><rect x="132" y="79" width="1" height="1" fill="#000000"/><rect x="134" y="79" width="1" height="1" fill="#000000"/><rect x="136" y="79" width="1" height="1" fill="#000000"/><rect x="129" y="81" width="11" height="1" fill="#000000"/><rect x="131" y="82" width="1" height="1" fill="#000000"/><rect x="132" y="82" width="1" height="1" fill="#808080"/><rect x="133" y="82" width="1" height="1" fill="#c0c0c0"/><rect x="134" y="82" width="1" height="1" fill="#e4e4e4"/><rect x="135" y="82" width="1" height="1" fill="#c0c0c0"/><rect x="136" y="82" width="1" height="1" fill="#808080"/><rect x="137" y="82" width="1" height="1" fill="#000000"/><rect x="131" y="83" width="1" height="1" fill="#000000"/><rect x="132" y="83" width="1" height="1" fill="#808080"/><rect x="133" y="83" width="1" height="1" fill="#c0c0c0"/><rect x="134" y="83" width="1" height="1" fill="#e4e4e4"/><rect x="135" y="83" width="1" height="1" fill="#c0c0c0"/><rect x="136" y="83" width="1" height="1" fill="#808080"/><rect x="137" y="83" width="1" height="1" fill="#000000"/><rect x="131" y="84" width="1" height="1" fill="#000000"/><rect x="132" y="84" width="1" height="1" fill="#808080"/><rect x="133" y="84" width="1" height="1" fill="#c0c0c0"/><rect x="134" y="84" width="1" height="1" fill="#e4e4e4"/><rect x="135" y="84" width="1" height="1" fill="#c0c0c0"/><rect x="136" y="84" width="1" height="1" fill="#808080"/><rect x="137" y="84" width="1" height="1" fill="#000000"/><rect x="131" y="85" width="1" height="1" fill="#000000"/><rect x="132" y="85" width="1" height="1" fill="#808080"/><rect x="133" y="85" width="1" height="1" fill="#c0c0c0"/><rect x="134" y="85" width="1" height="1" fill="#e4e4e4"/><rect x="135" y="85" width="1" height="1" fill="#c0c0c0"/><rect x="136" y="85" width="1" height="1" fill="#808080"/><rect x="137" y="85" width="1" height="1" fill="#000000"/><rect x="131" y="86" width="1" height="1" fill="#000000"/><rect x="132" y="86" width="1" height="1" fill="#808080"/><rect x="133" y="86" width="1" height="1" fill="#c0c0c0"/><rect x="134" y="86" width="1" height="1" fill="#e4e4e4"/><rect x="135" y="86" width="1" height="1" fill="#c0c0c0"/><rect x="136" y="86" width="1" height="1" fill="#808080"/><rect x="137" y="86" width="1" height="1" fill="#000000"/><rect x="131" y="87" width="1" height="1" fill="#000000"/><rect x="132" y="87" width="1" height="1" fill="#808080"/><rect x="133" y="87" width="1" height="1" fill="#c0c0c0"/><rect x="134" y="87" width="1" height="1" fill="#e4e4e4"/><rect x="135" y="87" width="1" height="1" fill="#c0c0c0"/><rect x="136" y="87" width="1" height="1" fill="#808080"/><rect x="137" y="87" width="1" height="1" fill="#000000"/><rect x="131" y="88" width="1" height="1" fill="#000000"/><rect x="132" y="88" width="1" height="1" fill="#808080"/><rect x="133" y="88" width="1" height="1" fill="#c0c0c0"/><rect x="134" y="88" width="1" height="1" fill="#e4e4e4"/><rect x="135" y="88" width="1" height="1" fill="#c0c0c0"/><rect x="136" y="88" width="1" height="1" fill="#808080"/><rect x="137" y="88" width="1" height="1" fill="#000000"/><rect x="130" y="90" width="3" height="1" fill="#000000"/><rect x="134" y="90" width="3" height="1" fill="#000000"/><rect x="138" y="90" width="1" height="1" fill="#000000"/><rect x="130" y="91" width="1" height="1" fill="#000000"/><rect x="132" y="91" width="1" height="1" fill="#000000"/><rect x="138" y="91" width="1" height="1" fill="#000000"/><rect x="130" y="92" width="1" height="1" fill="#000000"/><rect x="132" y="92" width="1" height="1" fill="#000000"/><rect x="134" y="92" width="3" height="1" fill="#000000"/><rect x="138" y="92" width="1" height="1" fill="#000000"/><rect x="158" y="78" width="2" height="1" fill="#000000"/><rect x="157" y="79" width="2" height="1" fill="#000000"/><rect x="157" y="80" width="2" height="1" fill="#000000"/><rect x="157" y="81" width="2" height="1" fill="#000000"/><rect x="157" y="82" width="2" height="1" fill="#000000"/><rect x="157" y="83" width="2" height="1" fill="#000000"/><rect x="157" y="84" width="2" height="1" fill="#000000"/><rect x="157" y="85" width="2" height="1" fill="#000000"/><rect x="157" y="86" width="2" height="1" fill="#000000"/><rect x="157" y="87" width="2" height="1" fill="#000000"/><rect x="157" y="88" width="2" height="1" fill="#000000"/><rect x="157" y="89" width="2" height="1" fill="#000000"/><rect x="157" y="90" width="2" height="1" fill="#000000"/><rect x="155" y="91" width="1" height="1" fill="#000000"/><rect x="157" y="91" width="2" height="1" fill="#000000"/><rect x="156" y="92" width="2" height="1" fill="#000000"/><rect x="175" y="78" width="11" height="1" fill="#000000"/><rect x="176" y="79" width="2" height="1" fill="#000000"/><rect x="184" y="79" width="2" height="1" fill="#000000"/><rect x="177" y="80" width="2" height="1" fill="#000000"/><rect x="185" y="80" width="1" height="1" fill="#000000"/><rect x="178" y="81" width="2" height="1" fill="#000000"/><rect x="179" y="82" width="3" height="1" fill="#000000"/><rect x="179" y="83" width="3" height="1" fill="#000000"/><rect x="178" y="84" width="2" height="1" fill="#000000"/><rect x="177" y="85" width="2" height="1" fill="#000000"/><rect x="185" y="85" width="1" height="1" fill="#000000"/><rect x="176" y="86" width="2" height="1" fill="#000000"/><rect x="184" y="86" width="2" height="1" fill="#000000"/><rect x="175" y="87" width="11" height="1" fill="#000000"/><rect x="179" y="89" width="4" height="1" fill="#000000"/><rect x="179" y="90" width="1" height="1" fill="#000000"/><rect x="182" y="90" width="1" height="1" fill="#000000"/><rect x="179" y="91" width="1" height="1" fill="#000000"/><rect x="182" y="91" width="1" height="1" fill="#000000"/><rect x="179" y="92" width="1" height="1" fill="#000000"/><rect x="182" y="92" width="1" height="1" fill="#000000"/><rect x="198" y="78" width="11" height="1" fill="#000000"/><rect x="200" y="79" width="1" height="1" fill="#000000"/><rect x="201" y="79" width="1" height="1" fill="#707070"/><rect x="202" y="79" width="1" height="1" fill="#c8c8c8"/><rect x="203" y="79" width="1" height="1" fill="#e8e8e8"/><rect x="204" y="79" width="1" height="1" fill="#c8c8c8"/><rect x="205" y="79" width="1" height="1" fill="#707070"/><rect x="206" y="79" width="1" height="1" fill="#000000"/><rect x="200" y="80" width="1" height="1" fill="#000000"/><rect x="201" y="80" width="1" height="1" fill="#707070"/><rect x="202" y="80" width="1" height="1" fill="#c8c8c8"/><rect x="203" y="80" width="1" height="1" fill="#e8e8e8"/><rect x="204" y="80" width="1" height="1" fill="#c8c8c8"/><rect x="205" y="80" width="1" height="1" fill="#707070"/><rect x="206" y="80" width="1" height="1" fill="#000000"/><rect x="200" y="81" width="1" height="1" fill="#000000"/><rect x="201" y="81" width="1" height="1" fill="#707070"/><rect x="202" y="81" width="1" height="1" fill="#c8c8c8"/><rect x="203" y="81" width="1" height="1" fill="#e8e8e8"/><rect x="204" y="81" width="1" height="1" fill="#c8c8c8"/><rect x="205" y="81" width="1" height="1" fill="#707070"/><rect x="206" y="81" width="1" height="1" fill="#000000"/><rect x="200" y="82" width="1" height="1" fill="#000000"/><rect x="201" y="82" width="1" height="1" fill="#707070"/><rect x="202" y="82" width="1" height="1" fill="#c8c8c8"/><rect x="203" y="82" width="1" height="1" fill="#e8e8e8"/><rect x="204" y="82" width="1" height="1" fill="#c8c8c8"/><rect x="205" y="82" width="1" height="1" fill="#707070"/><rect x="206" y="82" width="1" height="1" fill="#000000"/><rect x="200" y="83" width="1" height="1" fill="#000000"/><rect x="201" y="83" width="1" height="1" fill="#707070"/><rect x="202" y="83" width="1" height="1" fill="#c8c8c8"/><rect x="203" y="83" width="1" height="1" fill="#e8e8e8"/><rect x="204" y="83" width="1" height="1" fill="#c8c8c8"/><rect x="205" y="83" width="1" height="1" fill="#707070"/><rect x="206" y="83" width="1" height="1" fill="#000000"/><rect x="200" y="84" width="1" height="1" fill="#000000"/><rect x="201" y="84" width="1" height="1" fill="#707070"/><rect x="202" y="84" width="1" height="1" fill="#c8c8c8"/><rect x="203" y="84" width="1" height="1" fill="#e8e8e8"/><rect x="204" y="84" width="1" height="1" fill="#c8c8c8"/><rect x="205" y="84" width="1" height="1" fill="#707070"/><rect x="206" y="84" width="1" height="1" fill="#000000"/><rect x="200" y="85" width="1" height="1" fill="#000000"/><rect x="201" y="85" width="1" height="1" fill="#707070"/><rect x="202" y="85" width="1" height="1" fill="#c8c8c8"/><rect x="203" y="85" width="1" height="1" fill="#e8e8e8"/><rect x="204" y="85" width="1" height="1" fill="#c8c8c8"/><rect x="205" y="85" width="1" height="1" fill="#707070"/><rect x="206" y="85" width="1" height="1" fill="#000000"/><rect x="200" y="86" width="1" height="1" fill="#000000"/><rect x="201" y="86" width="1" height="1" fill="#707070"/><rect x="202" y="86" width="1" height="1" fill="#c8c8c8"/><rect x="203" y="86" width="1" height="1" fill="#e8e8e8"/><rect x="204" y="86" width="1" height="1" fill="#c8c8c8"/><rect x="205" y="86" width="1" height="1" fill="#707070"/><rect x="206" y="86" width="1" height="1" fill="#000000"/><rect x="202" y="88" width="3" height="1" fill="#000000"/><rect x="202" y="89" width="1" height="1" fill="#000000"/><rect x="205" y="89" width="1" height="1" fill="#000000"/><rect x="202" y="90" width="1" height="1" fill="#000000"/><rect x="205" y="90" width="1" height="1" fill="#000000"/><rect x="202" y="91" width="1" height="1" fill="#000000"/><rect x="205" y="91" width="1" height="1" fill="#000000"/><rect x="221" y="78" width="2" height="1" fill="#000000"/><rect x="224" y="78" width="1" height="1" fill="#000000"/><rect x="222" y="79" width="1" height="1" fill="#000000"/><rect x="222" y="80" width="1" height="1" fill="#000000"/><rect x="224" y="80" width="1" height="1" fill="#000000"/><rect x="226" y="80" width="5" height="1" fill="#000000"/><rect x="222" y="81" width="1" height="1" fill="#000000"/><rect x="224" y="81" width="1" height="1" fill="#000000"/><rect x="226" y="81" width="1" height="1" fill="#000000"/><rect x="228" y="81" width="1" height="1" fill="#000000"/><rect x="230" y="81" width="1" height="1" fill="#000000"/><rect x="222" y="82" width="1" height="1" fill="#000000"/><rect x="224" y="82" width="1" height="1" fill="#000000"/><rect x="226" y="82" width="1" height="1" fill="#000000"/><rect x="228" y="82" width="1" height="1" fill="#000000"/><rect x="230" y="82" width="1" height="1" fill="#000000"/><rect x="222" y="83" width="1" height="1" fill="#000000"/><rect x="224" y="83" width="1" height="1" fill="#000000"/><rect x="226" y="83" width="1" height="1" fill="#000000"/><rect x="228" y="83" width="1" height="1" fill="#000000"/><rect x="230" y="83" width="1" height="1" fill="#000000"/><rect x="222" y="84" width="1" height="1" fill="#000000"/><rect x="224" y="84" width="1" height="1" fill="#000000"/><rect x="226" y="84" width="1" height="1" fill="#000000"/><rect x="228" y="84" width="1" height="1" fill="#000000"/><rect x="230" y="84" width="1" height="1" fill="#000000"/><rect x="224" y="87" width="1" height="1" fill="#000000"/><rect x="227" y="87" width="3" height="1" fill="#000000"/><rect x="225" y="88" width="1" height="1" fill="#000000"/><rect x="229" y="88" width="1" height="1" fill="#000000"/><rect x="220" y="89" width="10" height="1" fill="#000000"/><rect x="225" y="90" width="1" height="1" fill="#000000"/><rect x="227" y="90" width="1" height="1" fill="#000000"/><rect x="229" y="90" width="1" height="1" fill="#000000"/><rect x="224" y="91" width="1" height="1" fill="#000000"/><rect x="227" y="91" width="3" height="1" fill="#000000"/><rect x="243" y="78" width="2" height="1" fill="#000000"/><rect x="246" y="78" width="1" height="1" fill="#000000"/><rect x="244" y="79" width="1" height="1" fill="#000000"/><rect x="244" y="80" width="1" height="1" fill="#000000"/><rect x="246" y="80" width="1" height="1" fill="#000000"/><rect x="248" y="80" width="5" height="1" fill="#000000"/><rect x="244" y="81" width="1" height="1" fill="#000000"/><rect x="246" y="81" width="1" height="1" fill="#000000"/><rect x="248" y="81" width="1" height="1" fill="#000000"/><rect x="250" y="81" width="1" height="1" fill="#000000"/><rect x="252" y="81" width="1" height="1" fill="#000000"/><rect x="244" y="82" width="1" height="1" fill="#000000"/><rect x="246" y="82" width="1" height="1" fill="#000000"/><rect x="248" y="82" width="1" height="1" fill="#000000"/><rect x="250" y="82" width="1" height="1" fill="#000000"/><rect x="252" y="82" width="1" height="1" fill="#000000"/><rect x="244" y="83" width="1" height="1" fill="#000000"/><rect x="246" y="83" width="1" height="1" fill="#000000"/><rect x="248" y="83" width="1" height="1" fill="#000000"/><rect x="250" y="83" width="1" height="1" fill="#000000"/><rect x="252" y="83" width="1" height="1" fill="#000000"/><rect x="244" y="84" width="1" height="1" fill="#000000"/><rect x="246" y="84" width="1" height="1" fill="#000000"/><rect x="248" y="84" width="1" height="1" fill="#000000"/><rect x="250" y="84" width="1" height="1" fill="#000000"/><rect x="252" y="84" width="1" height="1" fill="#000000"/><rect x="246" y="87" width="1" height="1" fill="#000000"/><rect x="249" y="87" width="3" height="1" fill="#000000"/><rect x="247" y="88" width="1" height="1" fill="#000000"/><rect x="251" y="88" width="1" height="1" fill="#000000"/><rect x="242" y="89" width="10" height="1" fill="#000000"/><rect x="247" y="90" width="1" height="1" fill="#000000"/><rect x="249" y="90" width="1" height="1" fill="#000000"/><rect x="251" y="90" width="1" height="1" fill="#000000"/><rect x="246" y="91" width="1" height="1" fill="#000000"/><rect x="249" y="91" width="3" height="1" fill="#000000"/><rect x="255" y="85" width="1" height="1" fill="#000000"/><rect x="255" y="86" width="1" height="1" fill="#000000"/><rect x="253" y="87" width="5" height="1" fill="#000000"/><rect x="255" y="88" width="1" height="1" fill="#000000"/><rect x="255" y="89" width="1" height="1" fill="#000000"/><rect x="266" y="78" width="2" height="1" fill="#000000"/><rect x="269" y="78" width="1" height="1" fill="#000000"/><rect x="267" y="79" width="1" height="1" fill="#000000"/><rect x="267" y="80" width="1" height="1" fill="#000000"/><rect x="269" y="80" width="1" height="1" fill="#000000"/><rect x="271" y="80" width="5" height="1" fill="#000000"/><rect x="267" y="81" width="1" height="1" fill="#000000"/><rect x="269" y="81" width="1" height="1" fill="#000000"/><rect x="271" y="81" width="1" height="1" fill="#000000"/><rect x="273" y="81" width="1" height="1" fill="#000000"/><rect x="275" y="81" width="1" height="1" fill="#000000"/><rect x="267" y="82" width="1" height="1" fill="#000000"/><rect x="269" y="82" width="1" height="1" fill="#000000"/><rect x="271" y="82" width="1" height="1" fill="#000000"/><rect x="273" y="82" width="1" height="1" fill="#000000"/><rect x="275" y="82" width="1" height="1" fill="#000000"/><rect x="267" y="83" width="1" height="1" fill="#000000"/><rect x="269" y="83" width="1" height="1" fill="#000000"/><rect x="271" y="83" width="1" height="1" fill="#000000"/><rect x="273" y="83" width="1" height="1" fill="#000000"/><rect x="275" y="83" width="1" height="1" fill="#000000"/><rect x="267" y="84" width="1" height="1" fill="#000000"/><rect x="269" y="84" width="1" height="1" fill="#000000"/><rect x="271" y="84" width="1" height="1" fill="#000000"/><rect x="273" y="84" width="1" height="1" fill="#000000"/><rect x="275" y="84" width="1" height="1" fill="#000000"/><rect x="269" y="87" width="1" height="1" fill="#000000"/><rect x="272" y="87" width="3" height="1" fill="#000000"/><rect x="270" y="88" width="1" height="1" fill="#000000"/><rect x="274" y="88" width="1" height="1" fill="#000000"/><rect x="265" y="89" width="10" height="1" fill="#000000"/><rect x="270" y="90" width="1" height="1" fill="#000000"/><rect x="272" y="90" width="1" height="1" fill="#000000"/><rect x="274" y="90" width="1" height="1" fill="#000000"/><rect x="269" y="91" width="1" height="1" fill="#000000"/><rect x="272" y="91" width="3" height="1" fill="#000000"/><rect x="278" y="87" width="4" height="1" fill="#000000"/><rect x="289" y="80" width="8" height="1" fill="#000000"/><rect x="302" y="80" width="2" height="1" fill="#000000"/><rect x="289" y="81" width="3" height="1" fill="#000000"/><rect x="292" y="81" width="2" height="1" fill="#ffffff"/><rect x="294" y="81" width="3" height="1" fill="#000000"/><rect x="301" y="81" width="1" height="1" fill="#000000"/><rect x="290" y="82" width="2" height="1" fill="#000000"/><rect x="292" y="82" width="2" height="1" fill="#ffffff"/><rect x="294" y="82" width="2" height="1" fill="#000000"/><rect x="301" y="82" width="1" height="1" fill="#000000"/><rect x="290" y="83" width="2" height="1" fill="#000000"/><rect x="292" y="83" width="1" height="1" fill="#ffffff"/><rect x="293" y="83" width="2" height="1" fill="#000000"/><rect x="300" y="83" width="3" height="1" fill="#000000"/><rect x="291" y="84" width="2" height="1" fill="#000000"/><rect x="293" y="84" width="1" height="1" fill="#ffffff"/><rect x="294" y="84" width="1" height="1" fill="#000000"/><rect x="301" y="84" width="1" height="1" fill="#000000"/><rect x="291" y="85" width="4" height="1" fill="#000000"/><rect x="301" y="85" width="1" height="1" fill="#000000"/><rect x="292" y="86" width="3" height="1" fill="#000000"/><rect x="301" y="86" width="1" height="1" fill="#000000"/><rect x="292" y="87" width="2" height="1" fill="#000000"/><rect x="295" y="87" width="1" height="1" fill="#000000"/><rect x="298" y="87" width="1" height="1" fill="#000000"/><rect x="301" y="87" width="1" height="1" fill="#000000"/><rect x="295" y="88" width="3" height="1" fill="#000000"/><rect x="295" y="89" width="3" height="1" fill="#000000"/><rect x="294" y="90" width="1" height="1" fill="#000000"/><rect x="298" y="90" width="1" height="1" fill="#000000"/><rect x="358" y="109" width="8" height="1" fill="#000000"/><rect x="359" y="110" width="3" height="1" fill="#000000"/><rect x="364" y="110" width="3" height="1" fill="#000000"/><rect x="359" y="111" width="3" height="1" fill="#000000"/><rect x="364" y="111" width="3" height="1" fill="#000000"/><rect x="359" y="112" width="3" height="1" fill="#000000"/><rect x="364" y="112" width="3" height="1" fill="#000000"/><rect x="359" y="113" width="7" height="1" fill="#000000"/><rect x="359" y="114" width="3" height="1" fill="#000000"/><rect x="364" y="114" width="4" height="1" fill="#000000"/><rect x="359" y="115" width="3" height="1" fill="#000000"/><rect x="364" y="115" width="4" height="1" fill="#000000"/><rect x="359" y="116" width="3" height="1" fill="#000000"/><rect x="364" y="116" width="4" height="1" fill="#000000"/><rect x="358" y="117" width="9" height="1" fill="#000000"/><rect x="385" y="109" width="5" height="1" fill="#000000"/><rect x="386" y="110" width="2" height="1" fill="#000000"/><rect x="385" y="111" width="3" height="1" fill="#000000"/><rect x="385" y="112" width="2" height="1" fill="#000000"/><rect x="384" y="113" width="3" height="1" fill="#000000"/><rect x="384" y="114" width="2" height="1" fill="#000000"/><rect x="383" y="115" width="3" height="1" fill="#000000"/><rect x="383" y="116" width="2" height="1" fill="#000000"/><rect x="381" y="117" width="5" height="1" fill="#000000"/><rect x="404" y="109" width="4" height="1" fill="#000000"/><rect x="409" y="109" width="4" height="1" fill="#000000"/><rect x="405" y="110" width="3" height="1" fill="#000000"/><rect x="410" y="110" width="2" height="1" fill="#000000"/><rect x="405" y="111" width="3" height="1" fill="#000000"/><rect x="410" y="111" width="2" height="1" fill="#000000"/><rect x="405" y="112" width="3" height="1" fill="#000000"/><rect x="410" y="112" width="2" height="1" fill="#000000"/><rect x="405" y="113" width="3" height="1" fill="#000000"/><rect x="410" y="113" width="2" height="1" fill="#000000"/><rect x="405" y="114" width="3" height="1" fill="#000000"/><rect x="410" y="114" width="2" height="1" fill="#000000"/><rect x="405" y="115" width="3" height="1" fill="#000000"/><rect x="410" y="115" width="2" height="1" fill="#000000"/><rect x="406" y="116" width="5" height="1" fill="#000000"/><rect x="407" y="117" width="3" height="1" fill="#000000"/><rect x="404" y="119" width="9" height="1" fill="#000000"/><rect x="434" y="108" width="10" height="1" fill="#000000"/><rect x="434" y="110" width="14" height="1" fill="#000000"/><rect x="434" y="112" width="10" height="1" fill="#000000"/><rect x="434" y="114" width="14" height="1" fill="#000000"/><rect x="434" y="116" width="10" height="1" fill="#000000"/><rect x="434" y="118" width="14" height="1" fill="#000000"/><rect x="458" y="108" width="10" height="1" fill="#000000"/><rect x="456" y="110" width="14" height="1" fill="#000000"/><rect x="458" y="112" width="10" height="1" fill="#000000"/><rect x="456" y="114" width="14" height="1" fill="#000000"/><rect x="458" y="116" width="10" height="1" fill="#000000"/><rect x="456" y="118" width="14" height="1" fill="#000000"/><rect x="483" y="108" width="10" height="1" fill="#000000"/><rect x="479" y="110" width="14" height="1" fill="#000000"/><rect x="483" y="112" width="10" height="1" fill="#000000"/><rect x="479" y="114" width="14" height="1" fill="#000000"/><rect x="483" y="116" width="10" height="1" fill="#000000"/><rect x="479" y="118" width="14" height="1" fill="#000000"/><rect x="510" y="107" width="3" height="1" fill="#000080"/><rect x="510" y="108" width="3" height="1" fill="#000080"/><rect x="515" y="108" width="9" height="1" fill="#000000"/><rect x="510" y="109" width="3" height="1" fill="#000080"/><rect x="510" y="112" width="3" height="1" fill="#000080"/><rect x="510" y="113" width="3" height="1" fill="#000080"/><rect x="515" y="113" width="9" height="1" fill="#000000"/><rect x="510" y="114" width="3" height="1" fill="#000080"/><rect x="510" y="117" width="3" height="1" fill="#000080"/><rect x="510" y="118" width="3" height="1" fill="#000080"/><rect x="515" y="118" width="9" height="1" fill="#000000"/><rect x="510" y="119" width="3" height="1" fill="#000080"/><rect x="534" y="107" width="1" height="1" fill="#000080"/><rect x="533" y="108" width="2" height="1" fill="#000080"/><rect x="534" y="109" width="1" height="1" fill="#000080"/><rect x="533" y="110" width="3" height="1" fill="#000080"/><rect x="533" y="112" width="2" height="1" fill="#000080"/><rect x="535" y="113" width="1" height="1" fill="#000080"/><rect x="534" y="114" width="1" height="1" fill="#000080"/><rect x="533" y="115" width="3" height="1" fill="#000080"/><rect x="533" y="117" width="3" height="1" fill="#000080"/><rect x="534" y="118" width="1" height="1" fill="#000080"/><rect x="535" y="119" width="1" height="1" fill="#000080"/><rect x="533" y="120" width="2" height="1" fill="#000080"/><rect x="538" y="108" width="9" height="1" fill="#000000"/><rect x="538" y="113" width="9" height="1" fill="#000000"/><rect x="538" y="118" width="9" height="1" fill="#000000"/><rect x="573" y="108" width="3" height="1" fill="#a0a0a0"/><rect x="576" y="109" width="1" height="1" fill="#a0a0a0"/><rect x="574" y="110" width="2" height="1" fill="#a0a0a0"/><rect x="573" y="111" width="1" height="1" fill="#a0a0a0"/><rect x="573" y="112" width="4" height="1" fill="#a0a0a0"/><rect x="566" y="113" width="2" height="1" fill="#a0a0a0"/><rect x="571" y="113" width="2" height="1" fill="#a0a0a0"/><rect x="567" y="114" width="2" height="1" fill="#a0a0a0"/><rect x="570" y="114" width="2" height="1" fill="#a0a0a0"/><rect x="568" y="115" width="3" height="1" fill="#a0a0a0"/><rect x="567" y="116" width="2" height="1" fill="#a0a0a0"/><rect x="570" y="116" width="2" height="1" fill="#a0a0a0"/><rect x="566" y="117" width="2" height="1" fill="#a0a0a0"/><rect x="571" y="117" width="2" height="1" fill="#a0a0a0"/><rect x="589" y="111" width="2" height="1" fill="#a0a0a0"/><rect x="594" y="111" width="2" height="1" fill="#a0a0a0"/><rect x="590" y="112" width="2" height="1" fill="#a0a0a0"/><rect x="593" y="112" width="2" height="1" fill="#a0a0a0"/><rect x="591" y="113" width="3" height="1" fill="#a0a0a0"/><rect x="590" y="114" width="2" height="1" fill="#a0a0a0"/><rect x="593" y="114" width="2" height="1" fill="#a0a0a0"/><rect x="596" y="114" width="3" height="1" fill="#a0a0a0"/><rect x="589" y="115" width="2" height="1" fill="#a0a0a0"/><rect x="594" y="115" width="2" height="1" fill="#a0a0a0"/><rect x="599" y="115" width="1" height="1" fill="#a0a0a0"/><rect x="598" y="116" width="2" height="1" fill="#a0a0a0"/><rect x="597" y="117" width="1" height="1" fill="#a0a0a0"/><rect x="597" y="118" width="4" height="1" fill="#a0a0a0"/><rect x="626" y="111" width="9" height="1" fill="#000000"/><rect x="626" y="112" width="9" height="1" fill="#000000"/><rect x="626" y="115" width="9" height="1" fill="#000000"/><rect x="626" y="116" width="9" height="1" fill="#000000"/><rect x="653" y="111" width="3" height="1" fill="#000000"/><rect x="651" y="112" width="3" height="1" fill="#000000"/><rect x="649" y="113" width="3" height="1" fill="#000000"/><rect x="648" y="114" width="2" height="1" fill="#000000"/><rect x="649" y="115" width="3" height="1" fill="#000000"/><rect x="651" y="116" width="3" height="1" fill="#000000"/><rect x="653" y="117" width="3" height="1" fill="#000000"/><rect x="672" y="111" width="3" height="1" fill="#000000"/><rect x="674" y="112" width="3" height="1" fill="#000000"/><rect x="676" y="113" width="3" height="1" fill="#000000"/><rect x="678" y="114" width="2" height="1" fill="#000000"/><rect x="676" y="115" width="3" height="1" fill="#000000"/><rect x="674" y="116" width="3" height="1" fill="#000000"/><rect x="672" y="117" width="3" height="1" fill="#000000"/><rect x="700" y="110" width="3" height="1" fill="#000000"/><rect x="698" y="111" width="3" height="1" fill="#000000"/><rect x="696" y="112" width="3" height="1" fill="#000000"/><rect x="695" y="113" width="2" height="1" fill="#000000"/><rect x="696" y="114" width="3" height="1" fill="#000000"/><rect x="698" y="115" width="3" height="1" fill="#000000"/><rect x="700" y="116" width="3" height="1" fill="#000000"/><rect x="695" y="118" width="8" height="1" fill="#000000"/><rect x="13" y="136" width="15" height="1" fill="#000080"/><rect x="13" y="137" width="1" height="1" fill="#000080"/><rect x="14" y="137" width="13" height="1" fill="#00ffff"/><rect x="27" y="137" width="1" height="1" fill="#000080"/><rect x="28" y="137" width="1" height="1" fill="#000000"/><rect x="13" y="138" width="1" height="1" fill="#000080"/><rect x="14" y="138" width="1" height="1" fill="#00ffff"/><rect x="15" y="138" width="11" height="1" fill="#000000"/><rect x="26" y="138" width="1" height="1" fill="#008080"/><rect x="27" y="138" width="1" height="1" fill="#000080"/><rect x="28" y="138" width="1" height="1" fill="#000000"/><rect x="13" y="139" width="1" height="1" fill="#000080"/><rect x="14" y="139" width="1" height="1" fill="#00ffff"/><rect x="15" y="139" width="1" height="1" fill="#000000"/><rect x="16" y="139" width="9" height="1" fill="#ffffff"/><rect x="25" y="139" width="1" height="1" fill="#000000"/><rect x="26" y="139" width="1" height="1" fill="#008080"/><rect x="27" y="139" width="1" height="1" fill="#000080"/><rect x="28" y="139" width="1" height="1" fill="#000000"/><rect x="13" y="140" width="1" height="1" fill="#000080"/><rect x="14" y="140" width="1" height="1" fill="#00ffff"/><rect x="15" y="140" width="1" height="1" fill="#000000"/><rect x="16" y="140" width="2" height="1" fill="#ffffff"/><rect x="18" y="140" width="1" height="1" fill="#000000"/><rect x="19" y="140" width="3" height="1" fill="#ffffff"/><rect x="22" y="140" width="1" height="1" fill="#000000"/><rect x="23" y="140" width="2" height="1" fill="#ffffff"/><rect x="25" y="140" width="1" height="1" fill="#000000"/><rect x="26" y="140" width="1" height="1" fill="#008080"/><rect x="27" y="140" width="1" height="1" fill="#000080"/><rect x="28" y="140" width="1" height="1" fill="#000000"/><rect x="13" y="141" width="1" height="1" fill="#000080"/><rect x="14" y="141" width="1" height="1" fill="#00ffff"/><rect x="15" y="141" width="12" height="1" fill="#008080"/><rect x="27" y="141" width="1" height="1" fill="#000080"/><rect x="28" y="141" width="1" height="1" fill="#000000"/><rect x="13" y="142" width="1" height="1" fill="#000080"/><rect x="14" y="142" width="1" height="1" fill="#00ffff"/><rect x="15" y="142" width="1" height="1" fill="#008080"/><rect x="16" y="142" width="1" height="1" fill="#ffffff"/><rect x="17" y="142" width="1" height="1" fill="#008080"/><rect x="18" y="142" width="1" height="1" fill="#ffffff"/><rect x="19" y="142" width="1" height="1" fill="#008080"/><rect x="20" y="142" width="1" height="1" fill="#ffffff"/><rect x="21" y="142" width="1" height="1" fill="#008080"/><rect x="22" y="142" width="1" height="1" fill="#ffffff"/><rect x="23" y="142" width="1" height="1" fill="#008080"/><rect x="24" y="142" width="1" height="1" fill="#ffffff"/><rect x="25" y="142" width="2" height="1" fill="#008080"/><rect x="27" y="142" width="1" height="1" fill="#000080"/><rect x="28" y="142" width="1" height="1" fill="#000000"/><rect x="13" y="143" width="1" height="1" fill="#000080"/><rect x="14" y="143" width="1" height="1" fill="#00ffff"/><rect x="15" y="143" width="12" height="1" fill="#008080"/><rect x="27" y="143" width="1" height="1" fill="#000080"/><rect x="28" y="143" width="1" height="1" fill="#000000"/><rect x="13" y="144" width="1" height="1" fill="#000080"/><rect x="14" y="144" width="1" height="1" fill="#00ffff"/><rect x="15" y="144" width="1" height="1" fill="#008080"/><rect x="16" y="144" width="1" height="1" fill="#ffffff"/><rect x="17" y="144" width="1" height="1" fill="#008080"/><rect x="18" y="144" width="1" height="1" fill="#ffffff"/><rect x="19" y="144" width="1" height="1" fill="#008080"/><rect x="20" y="144" width="1" height="1" fill="#ffffff"/><rect x="21" y="144" width="1" height="1" fill="#008080"/><rect x="22" y="144" width="1" height="1" fill="#ffffff"/><rect x="23" y="144" width="1" height="1" fill="#008080"/><rect x="24" y="144" width="1" height="1" fill="#ffffff"/><rect x="25" y="144" width="2" height="1" fill="#008080"/><rect x="27" y="144" width="1" height="1" fill="#000080"/><rect x="28" y="144" width="1" height="1" fill="#000000"/><rect x="13" y="145" width="1" height="1" fill="#000080"/><rect x="14" y="145" width="1" height="1" fill="#00ffff"/><rect x="15" y="145" width="12" height="1" fill="#008080"/><rect x="27" y="145" width="1" height="1" fill="#000080"/><rect x="28" y="145" width="1" height="1" fill="#000000"/><rect x="13" y="146" width="1" height="1" fill="#000080"/><rect x="14" y="146" width="1" height="1" fill="#00ffff"/><rect x="15" y="146" width="1" height="1" fill="#008080"/><rect x="16" y="146" width="1" height="1" fill="#ffffff"/><rect x="17" y="146" width="1" height="1" fill="#008080"/><rect x="18" y="146" width="1" height="1" fill="#ffffff"/><rect x="19" y="146" width="1" height="1" fill="#008080"/><rect x="20" y="146" width="1" height="1" fill="#ffffff"/><rect x="21" y="146" width="1" height="1" fill="#008080"/><rect x="22" y="146" width="3" height="1" fill="#ffffff"/><rect x="25" y="146" width="2" height="1" fill="#008080"/><rect x="27" y="146" width="1" height="1" fill="#000080"/><rect x="28" y="146" width="1" height="1" fill="#000000"/><rect x="13" y="147" width="1" height="1" fill="#000080"/><rect x="14" y="147" width="1" height="1" fill="#00ffff"/><rect x="15" y="147" width="12" height="1" fill="#008080"/><rect x="27" y="147" width="1" height="1" fill="#000080"/><rect x="28" y="147" width="1" height="1" fill="#000000"/><rect x="13" y="148" width="15" height="1" fill="#000080"/><rect x="28" y="148" width="1" height="1" fill="#000000"/><rect x="14" y="149" width="15" height="1" fill="#000000"/><rect x="42" y="135" width="1" height="1" fill="#000000"/><rect x="42" y="136" width="1" height="1" fill="#000000"/><rect x="49" y="136" width="1" height="1" fill="#ff0000"/><rect x="42" y="137" width="1" height="1" fill="#000000"/><rect x="49" y="137" width="1" height="1" fill="#ff0000"/><rect x="39" y="138" width="2" height="1" fill="#ff0000"/><rect x="42" y="138" width="1" height="1" fill="#000000"/><rect x="48" y="138" width="1" height="1" fill="#ff0000"/><rect x="38" y="139" width="1" height="1" fill="#ff0000"/><rect x="41" y="139" width="1" height="1" fill="#ff0000"/><rect x="42" y="139" width="1" height="1" fill="#000000"/><rect x="48" y="139" width="1" height="1" fill="#ff0000"/><rect x="38" y="140" width="1" height="1" fill="#ff0000"/><rect x="42" y="140" width="1" height="1" fill="#ff0000"/><rect x="47" y="140" width="1" height="1" fill="#ff0000"/><rect x="37" y="141" width="1" height="1" fill="#ff0000"/><rect x="42" y="141" width="1" height="1" fill="#000000"/><rect x="43" y="141" width="1" height="1" fill="#ff0000"/><rect x="47" y="141" width="1" height="1" fill="#ff0000"/><rect x="35" y="142" width="2" height="1" fill="#000000"/><rect x="37" y="142" width="1" height="1" fill="#ff0000"/><rect x="38" y="142" width="5" height="1" fill="#000000"/><rect x="43" y="142" width="1" height="1" fill="#ff0000"/><rect x="44" y="142" width="2" height="1" fill="#000000"/><rect x="46" y="142" width="1" height="1" fill="#ff0000"/><rect x="47" y="142" width="3" height="1" fill="#000000"/><rect x="36" y="143" width="1" height="1" fill="#ff0000"/><rect x="42" y="143" width="1" height="1" fill="#000000"/><rect x="44" y="143" width="1" height="1" fill="#ff0000"/><rect x="46" y="143" width="1" height="1" fill="#ff0000"/><rect x="36" y="144" width="1" height="1" fill="#ff0000"/><rect x="42" y="144" width="1" height="1" fill="#000000"/><rect x="44" y="144" width="1" height="1" fill="#ff0000"/><rect x="46" y="144" width="1" height="1" fill="#ff0000"/><rect x="35" y="145" width="1" height="1" fill="#ff0000"/><rect x="42" y="145" width="1" height="1" fill="#000000"/><rect x="45" y="145" width="1" height="1" fill="#ff0000"/><rect x="35" y="146" width="1" height="1" fill="#ff0000"/><rect x="42" y="146" width="1" height="1" fill="#000000"/><rect x="42" y="147" width="1" height="1" fill="#000000"/><rect x="42" y="148" width="1" height="1" fill="#000000"/><rect x="42" y="149" width="1" height="1" fill="#000000"/><rect x="59" y="135" width="3" height="1" fill="#000000"/><rect x="72" y="135" width="3" height="1" fill="#000000"/><rect x="59" y="136" width="1" height="1" fill="#000000"/><rect x="74" y="136" width="1" height="1" fill="#000000"/><rect x="59" y="137" width="1" height="1" fill="#000000"/><rect x="74" y="137" width="1" height="1" fill="#000000"/><rect x="59" y="138" width="1" height="1" fill="#000000"/><rect x="62" y="138" width="2" height="1" fill="#800000"/><rect x="66" y="138" width="2" height="1" fill="#000080"/><rect x="70" y="138" width="2" height="1" fill="#800000"/><rect x="74" y="138" width="1" height="1" fill="#000000"/><rect x="59" y="139" width="1" height="1" fill="#000000"/><rect x="62" y="139" width="2" height="1" fill="#800000"/><rect x="66" y="139" width="2" height="1" fill="#000080"/><rect x="70" y="139" width="2" height="1" fill="#800000"/><rect x="74" y="139" width="1" height="1" fill="#000000"/><rect x="59" y="140" width="1" height="1" fill="#000000"/><rect x="74" y="140" width="1" height="1" fill="#000000"/><rect x="59" y="141" width="1" height="1" fill="#000000"/><rect x="74" y="141" width="1" height="1" fill="#000000"/><rect x="59" y="142" width="1" height="1" fill="#000000"/><rect x="62" y="142" width="2" height="1" fill="#000080"/><rect x="66" y="142" width="2" height="1" fill="#000080"/><rect x="70" y="142" width="2" height="1" fill="#800000"/><rect x="74" y="142" width="1" height="1" fill="#000000"/><rect x="59" y="143" width="1" height="1" fill="#000000"/><rect x="62" y="143" width="2" height="1" fill="#000080"/><rect x="66" y="143" width="2" height="1" fill="#000080"/><rect x="70" y="143" width="2" height="1" fill="#800000"/><rect x="74" y="143" width="1" height="1" fill="#000000"/><rect x="59" y="144" width="1" height="1" fill="#000000"/><rect x="74" y="144" width="1" height="1" fill="#000000"/><rect x="59" y="145" width="1" height="1" fill="#000000"/><rect x="74" y="145" width="1" height="1" fill="#000000"/><rect x="59" y="146" width="1" height="1" fill="#000000"/><rect x="62" y="146" width="2" height="1" fill="#800000"/><rect x="66" y="146" width="2" height="1" fill="#000080"/><rect x="70" y="146" width="2" height="1" fill="#800000"/><rect x="74" y="146" width="1" height="1" fill="#000000"/><rect x="59" y="147" width="1" height="1" fill="#000000"/><rect x="62" y="147" width="2" height="1" fill="#800000"/><rect x="66" y="147" width="2" height="1" fill="#000080"/><rect x="70" y="147" width="2" height="1" fill="#800000"/><rect x="74" y="147" width="1" height="1" fill="#000000"/><rect x="59" y="148" width="1" height="1" fill="#000000"/><rect x="74" y="148" width="1" height="1" fill="#000000"/><rect x="59" y="149" width="1" height="1" fill="#000000"/><rect x="74" y="149" width="1" height="1" fill="#000000"/><rect x="59" y="150" width="3" height="1" fill="#000000"/><rect x="72" y="150" width="3" height="1" fill="#000000"/><rect x="82" y="141" width="2" height="1" fill="#000000"/><rect x="86" y="141" width="1" height="1" fill="#000000"/><rect x="89" y="141" width="7" height="1" fill="#000080"/><rect x="83" y="142" width="1" height="1" fill="#000000"/><rect x="85" y="142" width="2" height="1" fill="#000000"/><rect x="89" y="142" width="7" height="1" fill="#000080"/><rect x="83" y="143" width="2" height="1" fill="#000000"/><rect x="83" y="144" width="2" height="1" fill="#000000"/><rect x="89" y="144" width="7" height="1" fill="#000080"/><rect x="82" y="145" width="1" height="1" fill="#000000"/><rect x="84" y="145" width="1" height="1" fill="#000000"/><rect x="86" y="145" width="1" height="1" fill="#000000"/><rect x="89" y="145" width="7" height="1" fill="#000080"/><rect x="81" y="146" width="1" height="1" fill="#000000"/><rect x="85" y="146" width="1" height="1" fill="#000000"/><rect x="108" y="135" width="3" height="1" fill="#000080"/><rect x="107" y="136" width="2" height="1" fill="#000080"/><rect x="110" y="136" width="2" height="1" fill="#000080"/><rect x="107" y="137" width="2" height="1" fill="#000080"/><rect x="107" y="138" width="2" height="1" fill="#000080"/><rect x="107" y="139" width="2" height="1" fill="#000080"/><rect x="107" y="140" width="2" height="1" fill="#000080"/><rect x="107" y="141" width="2" height="1" fill="#000080"/><rect x="107" y="142" width="2" height="1" fill="#000080"/><rect x="107" y="143" width="2" height="1" fill="#000080"/><rect x="107" y="144" width="2" height="1" fill="#000080"/><rect x="107" y="145" width="2" height="1" fill="#000080"/><rect x="107" y="146" width="2" height="1" fill="#000080"/><rect x="107" y="147" width="2" height="1" fill="#000080"/><rect x="105" y="148" width="1" height="1" fill="#000080"/><rect x="107" y="148" width="2" height="1" fill="#000080"/><rect x="105" y="149" width="3" height="1" fill="#000080"/><rect x="106" y="150" width="1" height="1" fill="#000080"/><rect x="115" y="135" width="2" height="1" fill="#800000"/><rect x="116" y="136" width="1" height="1" fill="#800000"/><rect x="113" y="137" width="2" height="1" fill="#800000"/><rect x="116" y="137" width="2" height="1" fill="#800000"/><rect x="120" y="137" width="1" height="1" fill="#800000"/><rect x="112" y="138" width="1" height="1" fill="#800000"/><rect x="115" y="138" width="2" height="1" fill="#800000"/><rect x="118" y="138" width="1" height="1" fill="#800000"/><rect x="120" y="138" width="1" height="1" fill="#800000"/><rect x="112" y="139" width="1" height="1" fill="#800000"/><rect x="116" y="139" width="1" height="1" fill="#800000"/><rect x="118" y="139" width="2" height="1" fill="#800000"/><rect x="112" y="140" width="1" height="1" fill="#800000"/><rect x="115" y="140" width="2" height="1" fill="#800000"/><rect x="119" y="140" width="1" height="1" fill="#800000"/><rect x="113" y="141" width="3" height="1" fill="#800000"/><rect x="119" y="141" width="1" height="1" fill="#800000"/><rect x="118" y="142" width="1" height="1" fill="#800000"/><rect x="112" y="143" width="9" height="1" fill="#000000"/><rect x="115" y="145" width="2" height="1" fill="#800000"/><rect x="113" y="146" width="2" height="1" fill="#800000"/><rect x="116" y="146" width="2" height="1" fill="#800000"/><rect x="120" y="146" width="1" height="1" fill="#800000"/><rect x="112" y="147" width="1" height="1" fill="#800000"/><rect x="115" y="147" width="2" height="1" fill="#800000"/><rect x="118" y="147" width="2" height="1" fill="#800000"/><rect x="112" y="148" width="1" height="1" fill="#800000"/><rect x="116" y="148" width="1" height="1" fill="#800000"/><rect x="119" y="148" width="1" height="1" fill="#800000"/><rect x="112" y="149" width="1" height="1" fill="#800000"/><rect x="115" y="149" width="2" height="1" fill="#800000"/><rect x="118" y="149" width="1" height="1" fill="#800000"/><rect x="120" y="149" width="1" height="1" fill="#800000"/><rect x="113" y="150" width="3" height="1" fill="#800000"/><rect x="117" y="150" width="1" height="1" fill="#800000"/><rect x="120" y="150" width="1" height="1" fill="#800000"/><rect x="132" y="138" width="2" height="1" fill="#800000"/><rect x="131" y="139" width="2" height="1" fill="#800000"/><rect x="129" y="140" width="2" height="1" fill="#800000"/><rect x="128" y="141" width="2" height="1" fill="#800000"/><rect x="129" y="142" width="2" height="1" fill="#800000"/><rect x="131" y="143" width="2" height="1" fill="#800000"/><rect x="132" y="144" width="2" height="1" fill="#800000"/><rect x="141" y="135" width="2" height="1" fill="#000080"/><rect x="136" y="136" width="7" height="1" fill="#000080"/><rect x="136" y="137" width="7" height="1" fill="#000080"/><rect x="139" y="138" width="2" height="1" fill="#000080"/><rect x="136" y="139" width="7" height="1" fill="#000080"/><rect x="136" y="140" width="7" height="1" fill="#000080"/><rect x="137" y="141" width="2" height="1" fill="#000080"/><rect x="135" y="143" width="2" height="1" fill="#000000"/><rect x="137" y="144" width="2" height="1" fill="#000000"/><rect x="139" y="145" width="3" height="1" fill="#000000"/><rect x="137" y="146" width="2" height="1" fill="#000000"/><rect x="135" y="147" width="2" height="1" fill="#000000"/><rect x="135" y="149" width="7" height="1" fill="#000000"/><rect x="151" y="135" width="7" height="1" fill="#000080"/><rect x="151" y="136" width="1" height="1" fill="#000080"/><rect x="152" y="136" width="1" height="1" fill="#ffff00"/><rect x="153" y="136" width="1" height="1" fill="#ffffff"/><rect x="154" y="136" width="1" height="1" fill="#ffff00"/><rect x="155" y="136" width="1" height="1" fill="#ffffff"/><rect x="156" y="136" width="1" height="1" fill="#ffff00"/><rect x="157" y="136" width="1" height="1" fill="#000080"/><rect x="160" y="136" width="1" height="1" fill="#800000"/><rect x="151" y="137" width="1" height="1" fill="#000080"/><rect x="152" y="137" width="1" height="1" fill="#ffffff"/><rect x="153" y="137" width="1" height="1" fill="#ffff00"/><rect x="154" y="137" width="1" height="1" fill="#ffffff"/><rect x="155" y="137" width="1" height="1" fill="#ffff00"/><rect x="156" y="137" width="1" height="1" fill="#ffffff"/><rect x="157" y="137" width="1" height="1" fill="#000080"/><rect x="159" y="137" width="7" height="1" fill="#800000"/><rect x="151" y="138" width="1" height="1" fill="#000080"/><rect x="152" y="138" width="1" height="1" fill="#ffff00"/><rect x="153" y="138" width="1" height="1" fill="#ffffff"/><rect x="154" y="138" width="1" height="1" fill="#ffff00"/><rect x="155" y="138" width="1" height="1" fill="#ffffff"/><rect x="156" y="138" width="1" height="1" fill="#ffff00"/><rect x="157" y="138" width="1" height="1" fill="#000080"/><rect x="160" y="138" width="1" height="1" fill="#800000"/><rect x="165" y="138" width="1" height="1" fill="#800000"/><rect x="151" y="139" width="7" height="1" fill="#000080"/><rect x="165" y="139" width="1" height="1" fill="#800000"/><rect x="154" y="140" width="1" height="1" fill="#800000"/><rect x="165" y="140" width="1" height="1" fill="#800000"/><rect x="154" y="141" width="1" height="1" fill="#800000"/><rect x="165" y="141" width="1" height="1" fill="#800000"/><rect x="153" y="142" width="3" height="1" fill="#800000"/><rect x="165" y="142" width="1" height="1" fill="#800000"/><rect x="154" y="143" width="1" height="1" fill="#800000"/><rect x="165" y="143" width="1" height="1" fill="#800000"/><rect x="154" y="144" width="1" height="1" fill="#000080"/><rect x="165" y="144" width="1" height="1" fill="#800000"/><rect x="153" y="145" width="1" height="1" fill="#000080"/><rect x="154" y="145" width="1" height="1" fill="#ffff00"/><rect x="155" y="145" width="1" height="1" fill="#000080"/><rect x="165" y="145" width="1" height="1" fill="#800000"/><rect x="152" y="146" width="1" height="1" fill="#000080"/><rect x="153" y="146" width="1" height="1" fill="#ffff00"/><rect x="154" y="146" width="1" height="1" fill="#ffffff"/><rect x="155" y="146" width="1" height="1" fill="#ffff00"/><rect x="156" y="146" width="1" height="1" fill="#000080"/><rect x="165" y="146" width="1" height="1" fill="#800000"/><rect x="151" y="147" width="1" height="1" fill="#000080"/><rect x="152" y="147" width="1" height="1" fill="#ffff00"/><rect x="153" y="147" width="1" height="1" fill="#ffffff"/><rect x="154" y="147" width="1" height="1" fill="#ffff00"/><rect x="155" y="147" width="1" height="1" fill="#ffffff"/><rect x="156" y="147" width="1" height="1" fill="#ffff00"/><rect x="157" y="147" width="1" height="1" fill="#000080"/><rect x="158" y="147" width="8" height="1" fill="#800000"/><rect x="152" y="148" width="1" height="1" fill="#000080"/><rect x="153" y="148" width="1" height="1" fill="#ffff00"/><rect x="154" y="148" width="1" height="1" fill="#ffffff"/><rect x="155" y="148" width="1" height="1" fill="#ffff00"/><rect x="156" y="148" width="1" height="1" fill="#000080"/><rect x="153" y="149" width="1" height="1" fill="#000080"/><rect x="154" y="149" width="1" height="1" fill="#ffff00"/><rect x="155" y="149" width="1" height="1" fill="#000080"/><rect x="154" y="150" width="1" height="1" fill="#000080"/><rect x="186" y="137" width="3" height="1" fill="#800000"/><rect x="185" y="138" width="2" height="1" fill="#800000"/><rect x="188" y="138" width="2" height="1" fill="#800000"/><rect x="184" y="139" width="2" height="1" fill="#800000"/><rect x="188" y="139" width="2" height="1" fill="#800000"/><rect x="175" y="140" width="3" height="1" fill="#000080"/><rect x="179" y="140" width="2" height="1" fill="#000080"/><rect x="184" y="140" width="2" height="1" fill="#800000"/><rect x="187" y="140" width="2" height="1" fill="#800000"/><rect x="174" y="141" width="2" height="1" fill="#000080"/><rect x="177" y="141" width="4" height="1" fill="#000080"/><rect x="183" y="141" width="2" height="1" fill="#800000"/><rect x="186" y="141" width="2" height="1" fill="#800000"/><rect x="173" y="142" width="2" height="1" fill="#000080"/><rect x="178" y="142" width="2" height="1" fill="#000080"/><rect x="183" y="142" width="2" height="1" fill="#800000"/><rect x="187" y="142" width="2" height="1" fill="#800000"/><rect x="173" y="143" width="2" height="1" fill="#000080"/><rect x="178" y="143" width="2" height="1" fill="#000080"/><rect x="182" y="143" width="2" height="1" fill="#800000"/><rect x="187" y="143" width="2" height="1" fill="#800000"/><rect x="173" y="144" width="2" height="1" fill="#000080"/><rect x="177" y="144" width="3" height="1" fill="#000080"/><rect x="182" y="144" width="2" height="1" fill="#800000"/><rect x="186" y="144" width="2" height="1" fill="#800000"/><rect x="174" y="145" width="3" height="1" fill="#000080"/><rect x="179" y="145" width="2" height="1" fill="#000080"/><rect x="181" y="145" width="2" height="1" fill="#800000"/><rect x="184" y="145" width="3" height="1" fill="#800000"/><rect x="181" y="146" width="4" height="1" fill="#800000"/><rect x="180" y="147" width="2" height="1" fill="#800000"/><rect x="180" y="148" width="1" height="1" fill="#800000"/><rect x="204" y="136" width="1" height="1" fill="#000000"/><rect x="202" y="137" width="5" height="1" fill="#000000"/><rect x="200" y="138" width="9" height="1" fill="#000000"/><rect x="198" y="139" width="13" height="1" fill="#000000"/><rect x="197" y="140" width="15" height="1" fill="#000000"/><rect x="198" y="141" width="13" height="1" fill="#000000"/><rect x="212" y="141" width="1" height="1" fill="#000080"/><rect x="200" y="142" width="9" height="1" fill="#000000"/><rect x="212" y="142" width="1" height="1" fill="#000080"/><rect x="199" y="143" width="2" height="1" fill="#000000"/><rect x="202" y="143" width="5" height="1" fill="#000000"/><rect x="208" y="143" width="2" height="1" fill="#000000"/><rect x="212" y="143" width="1" height="1" fill="#000080"/><rect x="199" y="144" width="3" height="1" fill="#000000"/><rect x="204" y="144" width="1" height="1" fill="#000000"/><rect x="207" y="144" width="3" height="1" fill="#000000"/><rect x="212" y="144" width="1" height="1" fill="#000080"/><rect x="199" y="145" width="4" height="1" fill="#000000"/><rect x="206" y="145" width="4" height="1" fill="#000000"/><rect x="212" y="145" width="1" height="1" fill="#808000"/><rect x="199" y="146" width="5" height="1" fill="#000000"/><rect x="205" y="146" width="5" height="1" fill="#000000"/><rect x="212" y="146" width="1" height="1" fill="#808000"/><rect x="200" y="147" width="4" height="1" fill="#000000"/><rect x="205" y="147" width="4" height="1" fill="#000000"/><rect x="212" y="147" width="1" height="1" fill="#808000"/><rect x="212" y="148" width="1" height="1" fill="#808000"/><rect x="212" y="149" width="1" height="1" fill="#808000"/><rect x="216" y="164" width="1" height="1" fill="#000000"/><rect x="216" y="165" width="2" height="1" fill="#000000"/><rect x="214" y="166" width="3" height="1" fill="#000000"/><rect x="217" y="166" width="1" height="1" fill="#00ff00"/><rect x="218" y="166" width="1" height="1" fill="#000000"/><rect x="212" y="167" width="2" height="1" fill="#000000"/><rect x="214" y="167" width="5" height="1" fill="#00ff00"/><rect x="219" y="167" width="1" height="1" fill="#000000"/><rect x="210" y="168" width="2" height="1" fill="#000000"/><rect x="212" y="168" width="8" height="1" fill="#00ff00"/><rect x="220" y="168" width="1" height="1" fill="#000000"/><rect x="209" y="169" width="1" height="1" fill="#000000"/><rect x="210" y="169" width="9" height="1" fill="#00ff00"/><rect x="219" y="169" width="1" height="1" fill="#000000"/><rect x="209" y="170" width="1" height="1" fill="#000000"/><rect x="210" y="170" width="2" height="1" fill="#00ff00"/><rect x="212" y="170" width="4" height="1" fill="#000000"/><rect x="216" y="170" width="2" height="1" fill="#00ff00"/><rect x="218" y="170" width="1" height="1" fill="#000000"/><rect x="208" y="171" width="1" height="1" fill="#000000"/><rect x="209" y="171" width="2" height="1" fill="#00ff00"/><rect x="211" y="171" width="1" height="1" fill="#000000"/><rect x="216" y="171" width="1" height="1" fill="#00ff00"/><rect x="217" y="171" width="1" height="1" fill="#000000"/><rect x="208" y="172" width="1" height="1" fill="#000000"/><rect x="209" y="172" width="1" height="1" fill="#00ff00"/><rect x="210" y="172" width="1" height="1" fill="#000000"/><rect x="216" y="172" width="1" height="1" fill="#000000"/><rect x="208" y="173" width="1" height="1" fill="#000000"/><rect x="209" y="173" width="1" height="1" fill="#00ff00"/><rect x="210" y="173" width="1" height="1" fill="#000000"/><rect x="208" y="174" width="1" height="1" fill="#000000"/><rect x="209" y="174" width="1" height="1" fill="#00ff00"/><rect x="210" y="174" width="1" height="1" fill="#000000"/><rect x="208" y="175" width="1" height="1" fill="#000000"/><rect x="209" y="175" width="1" height="1" fill="#00ff00"/><rect x="210" y="175" width="1" height="1" fill="#000000"/><rect x="209" y="176" width="1" height="1" fill="#000000"/><rect x="210" y="176" width="1" height="1" fill="#00ff00"/><rect x="211" y="176" width="1" height="1" fill="#000000"/><rect x="210" y="177" width="3" height="1" fill="#000000"/><rect x="224" y="168" width="4" height="1" fill="#000000"/><rect x="223" y="169" width="1" height="1" fill="#000000"/><rect x="228" y="169" width="1" height="1" fill="#000000"/><rect x="223" y="170" width="1" height="1" fill="#000000"/><rect x="223" y="171" width="1" height="1" fill="#000000"/><rect x="226" y="171" width="3" height="1" fill="#000000"/><rect x="231" y="171" width="3" height="1" fill="#000000"/><rect x="223" y="172" width="1" height="1" fill="#000000"/><rect x="228" y="172" width="1" height="1" fill="#000000"/><rect x="230" y="172" width="1" height="1" fill="#000000"/><rect x="234" y="172" width="1" height="1" fill="#000000"/><rect x="223" y="173" width="1" height="1" fill="#000000"/><rect x="228" y="173" width="1" height="1" fill="#000000"/><rect x="230" y="173" width="1" height="1" fill="#000000"/><rect x="234" y="173" width="1" height="1" fill="#000000"/><rect x="223" y="174" width="1" height="1" fill="#000000"/><rect x="228" y="174" width="1" height="1" fill="#000000"/><rect x="230" y="174" width="1" height="1" fill="#000000"/><rect x="234" y="174" width="1" height="1" fill="#000000"/><rect x="224" y="175" width="4" height="1" fill="#000000"/><rect x="231" y="175" width="3" height="1" fill="#000000"/></svg>

<!-- chevrons in combos -->
<svg class="a" style="left:0;top:0" width="714" height="419">
<g fill="none" stroke="#555" stroke-width="2">
<polyline points="565,54 568.5,57.5 572,54"/>
<polyline points="127,112 130.5,115.5 134,112"/>
<polyline points="287,112 290.5,115.5 294,112"/>
<polyline points="332,112 335.5,115.5 339,112"/>
<polyline points="187,170 190.5,173.5 194,170"/>
</g>
</svg>

<div class="t" style="left:366px;top:49px;font-family:'Liberation Serif';font-style:italic;font-weight:bold;font-size:14px;color:#000080;letter-spacing:-1px">f(x)</div>


<!-- document -->
<div class="serif" style="left:27px;top:210px">x</div>
<div class="serif" style="left:51px;top:210px">3</div>
<div class="serif" style="left:28px;top:242px">y</div>
<div class="serif" style="left:54px;top:242px">4</div>
<div class="serif" style="left:27px;top:298px">x</div>
<div class="serif" style="left:32px;top:290px">2</div>
<div class="serif" style="left:55px;top:298px">y</div>
<div class="serif" style="left:61px;top:290px">3</div>
<div class="serif" style="left:83px;top:298px">10</div>
<div class="serif" style="left:111px;top:298px">63</div>
<div class="serif" style="left:27px;top:330px">x</div>
<div class="serif" style="left:32px;top:322px">2</div>
<div class="serif" style="left:55px;top:330px">y</div>
<div class="serif" style="left:61px;top:322px">3</div>
<div class="serif" style="left:83px;top:330px">10</div>
<div class="serif" style="left:117px;top:330px">3</div>
<div class="serif" style="left:123px;top:322px">2</div>
<div class="serif" style="left:146px;top:330px">4</div>
<div class="serif" style="left:151px;top:322px">3</div>
<div class="serif" style="left:173px;top:330px">10</div>
<div class="serif" style="left:201px;top:330px">63</div>
<svg class="a" style="left:0;top:0" width="714" height="419" shape-rendering="crispEdges"><rect x="38" y="215" width="1" height="2" fill="#000"/><rect x="38" y="219" width="1" height="2" fill="#000"/><rect x="40" y="216" width="7" height="1" fill="#000"/><rect x="40" y="218" width="7" height="1" fill="#000"/><rect x="40" y="247" width="1" height="2" fill="#000"/><rect x="40" y="251" width="1" height="2" fill="#000"/><rect x="42" y="248" width="7" height="1" fill="#000"/><rect x="42" y="250" width="7" height="1" fill="#000"/><rect x="43" y="305" width="7" height="1" fill="#000"/><rect x="46" y="302" width="1" height="7" fill="#000"/><rect x="72" y="305" width="7" height="1" fill="#000"/><rect x="100" y="304" width="7" height="1" fill="#000"/><rect x="100" y="306" width="7" height="1" fill="#000"/><rect x="43" y="337" width="7" height="1" fill="#000"/><rect x="46" y="334" width="1" height="7" fill="#000"/><rect x="72" y="337" width="7" height="1" fill="#000"/><rect x="103" y="336" width="7" height="1" fill="#000"/><rect x="103" y="338" width="7" height="1" fill="#000"/><rect x="134" y="337" width="7" height="1" fill="#000"/><rect x="137" y="334" width="1" height="7" fill="#000"/><rect x="162" y="337" width="7" height="1" fill="#000"/><rect x="190" y="336" width="7" height="1" fill="#000"/><rect x="190" y="338" width="7" height="1" fill="#000"/></svg>
<div class="txt" style="left:138px;top:298px">формула без подстановки значений</div>
<div class="txt" style="left:226px;top:330px">формула с автоматической подстановкой значений</div>
<div class="a" style="left:270px;top:388px;width:9px;height:1px;background:#f00"></div>
<div class="a" style="left:274px;top:384px;width:1px;height:9px;background:#f00"></div>
</body></html>
